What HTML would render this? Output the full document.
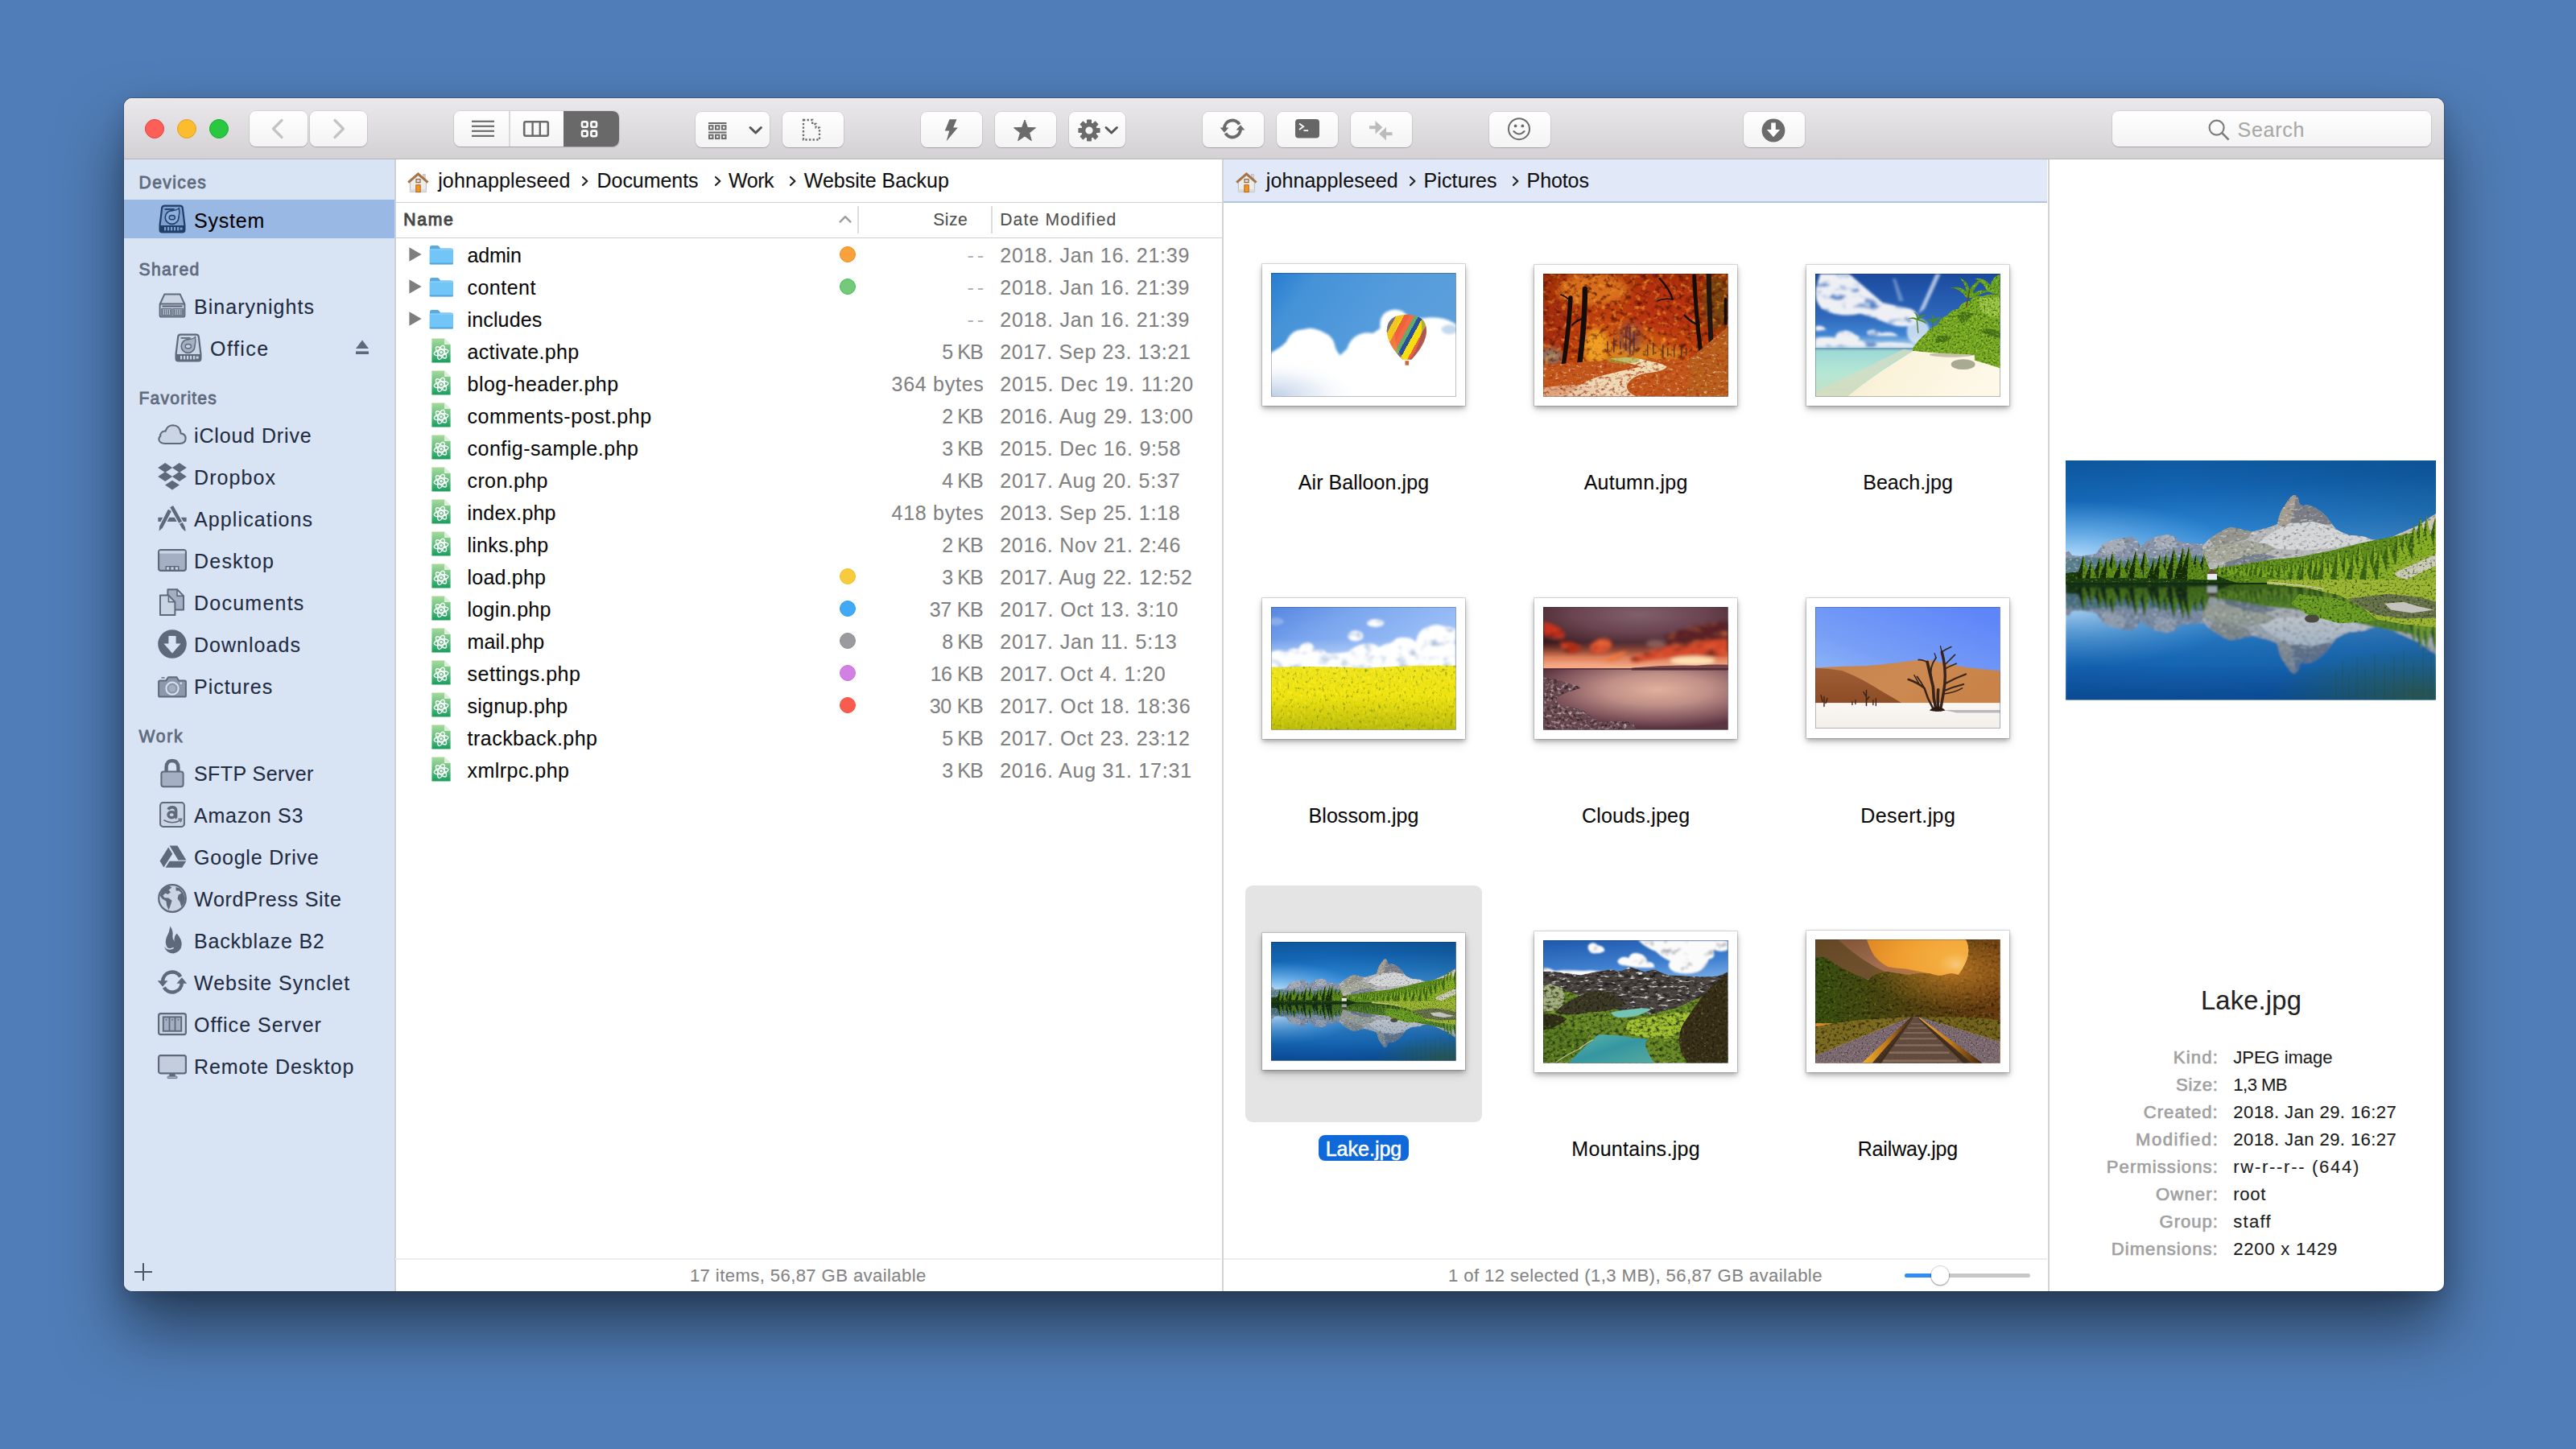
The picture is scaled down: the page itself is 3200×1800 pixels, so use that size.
<!DOCTYPE html>
<html lang="en"><head><meta charset="utf-8"><title>ForkLift</title>
<style>
html,body{margin:0;padding:0}
body{width:3200px;height:1800px;overflow:hidden;position:relative;background:#507db7;font-family:"Liberation Sans",sans-serif;}
.b{position:absolute;box-sizing:border-box;display:block}
.t{position:absolute;white-space:pre;font-family:"Liberation Sans",sans-serif}
#win{position:absolute;left:154px;top:122px;width:2882px;height:1482px;border-radius:10px;background:#fff;overflow:hidden}
#shadow{position:absolute;left:154px;top:122px;width:2882px;height:1482px;border-radius:10px;box-shadow:0 46px 80px rgba(0,0,0,.50), 0 0 0 1px rgba(0,0,0,.22), 0 8px 24px rgba(0,0,0,.16)}
#g{position:absolute;left:-154px;top:-122px;width:3200px;height:1800px}
.t{-webkit-text-stroke:0.1px currentColor}
</style></head><body>
<div id="shadow"></div>
<div id="win"><div id="g">
<div class="b" style="left:154px;top:122px;width:2882px;height:76px;background:linear-gradient(#eae8eb,#d3d1d4);border-bottom:1.5px solid #b6b4b6;border-top:1px solid #f5f4f5"></div>
<div class="b" style="left:154px;top:198px;width:338px;height:1406px;background:#d8e3f3;border-right:2px solid #cdd0d5"></div>
<div class="b" style="left:1517.5px;top:198px;width:2px;height:1406px;background:#d3d3d3"></div>
<div class="b" style="left:2543.5px;top:198px;width:2px;height:1406px;background:#d3d3d3"></div>
<div class="b" style="left:492px;top:198px;width:1026px;height:54px;background:#fff;border-bottom:1.2px solid #cfcfcf"></div>
<div class="b" style="left:1520px;top:198px;width:1023px;height:54px;background:#e1e8f8;border-bottom:2px solid #b5c3df"></div>
<div class="b" style="left:492px;top:294.6px;width:1026px;height:1.2px;background:#cfcfcf"></div>
<div class="b" style="left:491px;top:1563px;width:1026px;height:2px;background:#ececec"></div>
<div class="b" style="left:1520px;top:1563px;width:1023px;height:2px;background:#ececec"></div>
<div class="b" style="left:180px;top:148px;width:24px;height:24px;border-radius:50%;background:#fc5f57;border:1px solid #e0443e"></div>
<div class="b" style="left:220px;top:148px;width:24px;height:24px;border-radius:50%;background:#fdbc2e;border:1px solid #dea123"></div>
<div class="b" style="left:260px;top:148px;width:24px;height:24px;border-radius:50%;background:#28c840;border:1px solid #1aab29"></div>
<div class="b" style="left:310px;top:138.3px;width:72px;height:43.4px;border-radius:8px;background:linear-gradient(#ffffff,#f3f3f3);box-shadow:0 0 0 1px rgba(0,0,0,.075),0 1.2px 0.8px -0.2px rgba(0,0,0,.17);"></div>
<div class="b" style="left:384.5px;top:138.3px;width:71.5px;height:43.4px;border-radius:8px;background:linear-gradient(#ffffff,#f3f3f3);box-shadow:0 0 0 1px rgba(0,0,0,.075),0 1.2px 0.8px -0.2px rgba(0,0,0,.17);"></div>
<svg class="b" style="left:330px;top:140px;" width="40" height="40" viewBox="0 0 40 40"><path d="M20 9.5 L9.5 20 L20 30.5" fill="none" stroke="#c3c3c3" stroke-width="3.2" stroke-linecap="round" stroke-linejoin="round"/></svg>
<svg class="b" style="left:400px;top:140px;" width="40" height="40" viewBox="0 0 40 40"><path d="M16 9.5 L26.5 20 L16 30.5" fill="none" stroke="#c3c3c3" stroke-width="3.2" stroke-linecap="round" stroke-linejoin="round"/></svg>
<div class="b" style="left:564px;top:138.3px;width:205px;height:43.4px;border-radius:8px;background:linear-gradient(#ffffff,#f3f3f3);box-shadow:0 0 0 1px rgba(0,0,0,.075),0 1.2px 0.8px -0.2px rgba(0,0,0,.17);overflow:hidden"><div class="b" style="left:68px;top:0;width:1.5px;height:44px;background:#dadada"></div><div class="b" style="left:136px;top:0;width:70px;height:44px;background:#6a696a"></div></div>
<svg class="b" style="left:584px;top:148px;" width="32" height="24" viewBox="0 0 32 24"><rect x="2" y="1.7" width="28" height="2.2" fill="#6b6b6b"/><rect x="2" y="7.7" width="28" height="2.2" fill="#6b6b6b"/><rect x="2" y="13.7" width="28" height="2.2" fill="#6b6b6b"/><rect x="2" y="19.8" width="28" height="2.2" fill="#6b6b6b"/></svg>
<svg class="b" style="left:648px;top:148px;" width="36" height="24" viewBox="0 0 36 24"><rect x="3.2" y="3.2" width="29.6" height="17.6" rx="2" fill="none" stroke="#6b6b6b" stroke-width="2.6"/><rect x="12.4" y="3" width="2.4" height="18" fill="#6b6b6b"/><rect x="21.6" y="3" width="2.4" height="18" fill="#6b6b6b"/></svg>
<svg class="b" style="left:720px;top:148px;" width="24" height="24" viewBox="0 0 24 24"><rect x="3" y="3.2" width="6.6" height="6.6" rx="1.6" fill="none" stroke="#fff" stroke-width="2.6"/><rect x="3" y="14.6" width="6.6" height="6.6" rx="1.6" fill="none" stroke="#fff" stroke-width="2.6"/><rect x="14.4" y="3.2" width="6.6" height="6.6" rx="1.6" fill="none" stroke="#fff" stroke-width="2.6"/><rect x="14.4" y="14.6" width="6.6" height="6.6" rx="1.6" fill="none" stroke="#fff" stroke-width="2.6"/></svg>
<div class="b" style="left:864px;top:139.3px;width:92px;height:43.4px;border-radius:8px;background:linear-gradient(#ffffff,#f3f3f3);box-shadow:0 0 0 1px rgba(0,0,0,.075),0 1.2px 0.8px -0.2px rgba(0,0,0,.17);"></div>
<svg class="b" style="left:880px;top:152px;" width="24" height="24" viewBox="0 0 24 24"><rect x="0" y="0" width="22.5" height="2" fill="#6b6b6b"/><rect x="1" y="4.2" width="4.5" height="4.4" fill="none" stroke="#6b6b6b" stroke-width="2"/><rect x="9" y="4.2" width="4.5" height="4.4" fill="none" stroke="#6b6b6b" stroke-width="2"/><rect x="17" y="4.2" width="4.5" height="4.4" fill="none" stroke="#6b6b6b" stroke-width="2"/><rect x="0" y="11.5" width="22.5" height="2" fill="#6b6b6b"/><rect x="1" y="15.7" width="4.5" height="4.4" fill="none" stroke="#6b6b6b" stroke-width="2"/><rect x="9" y="15.7" width="4.5" height="4.4" fill="none" stroke="#6b6b6b" stroke-width="2"/><rect x="17" y="15.7" width="4.5" height="4.4" fill="none" stroke="#6b6b6b" stroke-width="2"/></svg>
<svg class="b" style="left:928px;top:152px;" width="22" height="18" viewBox="0 0 22 18"><path d="M4 6.5 L10.7 13 L17.4 6.5" fill="none" stroke="#555" stroke-width="3" stroke-linecap="round" stroke-linejoin="round"/></svg>
<div class="b" style="left:972px;top:139.3px;width:76px;height:43.4px;border-radius:8px;background:linear-gradient(#ffffff,#f3f3f3);box-shadow:0 0 0 1px rgba(0,0,0,.075),0 1.2px 0.8px -0.2px rgba(0,0,0,.17);"></div>
<svg class="b" style="left:995px;top:146px;" width="28" height="32" viewBox="0 0 28 32"><path d="M3 3 H14.2 V8 H18.6 V12.6 H23 V27.5 H3 Z" fill="none" stroke="#6b6b6b" stroke-width="2.3" stroke-dasharray="2.3 2.3"/></svg>
<div class="b" style="left:1144px;top:139.3px;width:76px;height:43.4px;border-radius:8px;background:linear-gradient(#ffffff,#f3f3f3);box-shadow:0 0 0 1px rgba(0,0,0,.075),0 1.2px 0.8px -0.2px rgba(0,0,0,.17);"></div>
<svg class="b" style="left:1168px;top:146px;" width="28" height="32" viewBox="0 0 28 32"><path d="M11.5 2.2 H20.5 L16.2 12.6 H21.8 L7.6 29.6 L11.3 16.6 H5.8 Z" fill="#6b6b6b"/></svg>
<div class="b" style="left:1236px;top:139.3px;width:76px;height:43.4px;border-radius:8px;background:linear-gradient(#ffffff,#f3f3f3);box-shadow:0 0 0 1px rgba(0,0,0,.075),0 1.2px 0.8px -0.2px rgba(0,0,0,.17);"></div>
<svg class="b" style="left:1257px;top:146px;" width="32" height="32" viewBox="0 0 32 32"><polygon points="16.00,3.00 19.47,12.43 29.51,12.81 21.61,19.02 24.35,28.69 16.00,23.10 7.65,28.69 10.39,19.02 2.49,12.81 12.53,12.43" fill="#6b6b6b" stroke="#6b6b6b" stroke-width="1" stroke-linejoin="round"/></svg>
<div class="b" style="left:1328px;top:139.3px;width:70px;height:43.4px;border-radius:8px;background:linear-gradient(#ffffff,#f3f3f3);box-shadow:0 0 0 1px rgba(0,0,0,.075),0 1.2px 0.8px -0.2px rgba(0,0,0,.17);"></div>
<svg class="b" style="left:1338px;top:147px;" width="30" height="30" viewBox="0 0 30 30"><g transform="translate(15,15)"><rect x="-3" y="-13.6" width="6" height="7" rx="0.8" transform="rotate(0)" fill="#6b6b6b"/><rect x="-3" y="-13.6" width="6" height="7" rx="0.8" transform="rotate(45)" fill="#6b6b6b"/><rect x="-3" y="-13.6" width="6" height="7" rx="0.8" transform="rotate(90)" fill="#6b6b6b"/><rect x="-3" y="-13.6" width="6" height="7" rx="0.8" transform="rotate(135)" fill="#6b6b6b"/><rect x="-3" y="-13.6" width="6" height="7" rx="0.8" transform="rotate(180)" fill="#6b6b6b"/><rect x="-3" y="-13.6" width="6" height="7" rx="0.8" transform="rotate(225)" fill="#6b6b6b"/><rect x="-3" y="-13.6" width="6" height="7" rx="0.8" transform="rotate(270)" fill="#6b6b6b"/><rect x="-3" y="-13.6" width="6" height="7" rx="0.8" transform="rotate(315)" fill="#6b6b6b"/><circle r="7.2" fill="none" stroke="#6b6b6b" stroke-width="5.2"/></g></svg>
<svg class="b" style="left:1370px;top:152px;" width="22" height="18" viewBox="0 0 22 18"><path d="M4 6.5 L10.7 13 L17.4 6.5" fill="none" stroke="#555" stroke-width="3" stroke-linecap="round" stroke-linejoin="round"/></svg>
<div class="b" style="left:1494px;top:139.3px;width:76px;height:43.4px;border-radius:8px;background:linear-gradient(#ffffff,#f3f3f3);box-shadow:0 0 0 1px rgba(0,0,0,.075),0 1.2px 0.8px -0.2px rgba(0,0,0,.17);"></div>
<svg class="b" style="left:1515px;top:144px;" width="32" height="32" viewBox="0 0 32 32"><path d="M6 15.4 A10 10 0 0 1 24.6 10.4" fill="none" stroke="#6b6b6b" stroke-width="4"/><path d="M26 16.6 A10 10 0 0 1 7.4 21.6" fill="none" stroke="#6b6b6b" stroke-width="4"/><path d="M0.6 14.6 H11.4 L6 20.8 Z" fill="#6b6b6b"/><path d="M20.6 17.4 H31.4 L26 11.2 Z" fill="#6b6b6b"/></svg>
<div class="b" style="left:1586px;top:139.3px;width:76px;height:43.4px;border-radius:8px;background:linear-gradient(#ffffff,#f3f3f3);box-shadow:0 0 0 1px rgba(0,0,0,.075),0 1.2px 0.8px -0.2px rgba(0,0,0,.17);"></div>
<svg class="b" style="left:1608px;top:147px;" width="32" height="26" viewBox="0 0 32 26"><rect x="1" y="1" width="30" height="23.6" rx="4" fill="#666"/><path d="M6 6.5 L11.2 10.2 L6 13.9" fill="none" stroke="#fff" stroke-width="1.8"/><rect x="11.5" y="14.3" width="5.6" height="1.8" fill="#fff"/></svg>
<div class="b" style="left:1678px;top:139.3px;width:76px;height:43.4px;border-radius:8px;background:linear-gradient(#ffffff,#f3f3f3);box-shadow:0 0 0 1px rgba(0,0,0,.075),0 1.2px 0.8px -0.2px rgba(0,0,0,.17);"></div>
<svg class="b" style="left:1699px;top:147px;" width="34" height="30" viewBox="0 0 34 30"><path d="M2 9.2 H9.5 V3 L18.4 11.2 L9.5 19.4 V13.2 H2 Z" fill="#bcbcbc"/><path d="M30.5 17.2 H23 V11 L14.1 19.2 L23 27.4 V21.2 H30.5 Z" fill="#bcbcbc"/></svg>
<div class="b" style="left:1850px;top:139.3px;width:76px;height:43.4px;border-radius:8px;background:linear-gradient(#ffffff,#f3f3f3);box-shadow:0 0 0 1px rgba(0,0,0,.075),0 1.2px 0.8px -0.2px rgba(0,0,0,.17);"></div>
<svg class="b" style="left:1871px;top:144px;" width="32" height="32" viewBox="0 0 32 32"><circle cx="16" cy="16.2" r="13" fill="none" stroke="#6b6b6b" stroke-width="2"/><circle cx="11.6" cy="12.4" r="1.9" fill="#6b6b6b"/><circle cx="20.4" cy="12.4" r="1.9" fill="#6b6b6b"/><path d="M9.4 19 Q16 26 22.6 19" fill="none" stroke="#6b6b6b" stroke-width="2" stroke-linecap="round"/></svg>
<div class="b" style="left:2166px;top:139.3px;width:76px;height:43.4px;border-radius:8px;background:linear-gradient(#ffffff,#f3f3f3);box-shadow:0 0 0 1px rgba(0,0,0,.075),0 1.2px 0.8px -0.2px rgba(0,0,0,.17);"></div>
<svg class="b" style="left:2187px;top:146px;" width="32" height="32" viewBox="0 0 32 32"><circle cx="16" cy="16" r="14.4" fill="#6b6b6b"/><path d="M13.2 6.6 H18.8 V15 H24.2 L16 24.2 L7.8 15 H13.2 Z" fill="#fff"/></svg>
<div class="b" style="left:2624px;top:138.3px;width:396px;height:43.4px;border-radius:8px;background:linear-gradient(#ffffff,#f3f3f3);box-shadow:0 0 0 1px rgba(0,0,0,.075),0 1.2px 0.8px -0.2px rgba(0,0,0,.17);"></div>
<svg class="b" style="left:2742px;top:147px;" width="30" height="30" viewBox="0 0 30 30"><circle cx="11.6" cy="11.6" r="9" fill="none" stroke="#7b7b7b" stroke-width="2.2"/><path d="M18.2 18.2 L26.6 26.6" stroke="#7b7b7b" stroke-width="2.6"/></svg>
<div class="t" style="left:2779.5px;top:147px;font-size:25.0px;line-height:28px;color:#a8a8a8;letter-spacing:0.76px;">Search</div>
<div class="b" style="left:154px;top:248px;width:336px;height:48px;background:#9ab8e4"></div>
<div class="t" style="left:172.5px;top:215px;font-size:21.15px;line-height:23px;color:#5f6b7e;letter-spacing:1.36px;-webkit-text-stroke:0.8px currentColor;">Devices</div>
<div class="t" style="left:172.5px;top:323px;font-size:21.15px;line-height:23px;color:#5f6b7e;letter-spacing:1.32px;-webkit-text-stroke:0.8px currentColor;">Shared</div>
<div class="t" style="left:172.5px;top:483px;font-size:21.15px;line-height:23px;color:#5f6b7e;letter-spacing:1.17px;-webkit-text-stroke:0.8px currentColor;">Favorites</div>
<div class="t" style="left:172.5px;top:903px;font-size:21.15px;line-height:23px;color:#5f6b7e;letter-spacing:1.75px;-webkit-text-stroke:0.8px currentColor;">Work</div>
<svg class="b" style="left:196px;top:253.8px;" width="36" height="36" viewBox="0 0 36 36"><path d="M8.2 1.6 H27.8 Q30.4 1.6 30.8 4.2 L33.4 25.6 V31.4 Q33.4 34.4 30.4 34.4 H5.6 Q2.6 34.4 2.6 31.4 V25.6 L5.2 4.2 Q5.6 1.6 8.2 1.6 Z" fill="#7e9fd0" stroke="#1d3f68" stroke-width="2.2" stroke-linejoin="round"/><path d="M3 26 H33 V31.4 Q33 33.9 30.4 33.9 H5.6 Q3 33.9 3 31.4 Z" fill="#1d3f68"/><rect x="8" y="28" width="2.2" height="4.4" fill="#7e9fd0"/><rect x="12" y="28" width="2.2" height="4.4" fill="#7e9fd0"/><rect x="16" y="28" width="2.2" height="4.4" fill="#7e9fd0"/><rect x="20" y="28" width="2.2" height="4.4" fill="#7e9fd0"/><rect x="24" y="28" width="2.2" height="4.4" fill="#7e9fd0"/><rect x="27.6" y="28.6" width="3" height="3" fill="#7e9fd0"/><rect x="8.6" y="5" width="12" height="1.8" fill="#1d3f68"/><circle cx="17.6" cy="16" r="8.4" fill="#8fb0dc" stroke="#1d3f68" stroke-width="1.6"/><path d="M17.6 7.6 Q24 7.4 26.4 4.6 Q27.6 10 26 16" fill="#8fb0dc" stroke="#1d3f68" stroke-width="1.4"/><ellipse cx="17.8" cy="16.2" rx="3.6" ry="2.6" fill="#7e9fd0" stroke="#1d3f68" stroke-width="1.5"/></svg>
<div class="t" style="left:241.0px;top:260px;font-size:25.0px;line-height:28px;color:#000;letter-spacing:0.81px;">System</div>
<svg class="b" style="left:196px;top:363.6px;" width="36" height="31" viewBox="0 0 36 31"><path d="M8.4 1.4 H27.6 L33.4 14 H2.6 Z" fill="#cbd4e3" stroke="#5e6a7b" stroke-width="2" stroke-linejoin="round"/><rect x="2.6" y="13.4" width="30.8" height="16.2" rx="2.2" fill="#cbd4e3" stroke="#5e6a7b" stroke-width="2"/><rect x="5.4" y="15.4" width="25.2" height="2.2" fill="#5e6a7b"/><rect x="5.6" y="20.4" width="1.3" height="6.4" fill="#5e6a7b"/><rect x="8" y="20.4" width="1.3" height="6.4" fill="#5e6a7b"/><rect x="10.4" y="20.4" width="1.3" height="6.4" fill="#5e6a7b"/><rect x="12.8" y="20.4" width="1.3" height="6.4" fill="#5e6a7b"/><rect x="15.2" y="20.4" width="1.3" height="6.4" fill="#5e6a7b"/><rect x="20" y="20.4" width="1.3" height="6.4" fill="#5e6a7b"/><rect x="22.4" y="20.4" width="1.3" height="6.4" fill="#5e6a7b"/><rect x="24.8" y="20.4" width="1.3" height="6.4" fill="#5e6a7b"/><rect x="27.2" y="20.4" width="1.3" height="6.4" fill="#5e6a7b"/><rect x="29.4" y="20.4" width="1.3" height="6.4" fill="#5e6a7b"/><rect x="4.8" y="19.6" width="12.4" height="8" fill="none" stroke="#5e6a7b" stroke-width="1.2"/><rect x="19" y="19.6" width="12.4" height="8" fill="none" stroke="#5e6a7b" stroke-width="1.2"/></svg>
<div class="t" style="left:241.0px;top:367px;font-size:25.0px;line-height:28px;color:#1f2c42;letter-spacing:1.03px;">Binarynights</div>
<svg class="b" style="left:216px;top:413.8px;" width="36" height="36" viewBox="0 0 36 36"><path d="M8.2 1.6 H27.8 Q30.4 1.6 30.8 4.2 L33.4 25.6 V31.4 Q33.4 34.4 30.4 34.4 H5.6 Q2.6 34.4 2.6 31.4 V25.6 L5.2 4.2 Q5.6 1.6 8.2 1.6 Z" fill="#cbd4e3" stroke="#5e6a7b" stroke-width="2.2" stroke-linejoin="round"/><path d="M3 26 H33 V31.4 Q33 33.9 30.4 33.9 H5.6 Q3 33.9 3 31.4 Z" fill="#5e6a7b"/><rect x="8" y="28" width="2.2" height="4.4" fill="#cbd4e3"/><rect x="12" y="28" width="2.2" height="4.4" fill="#cbd4e3"/><rect x="16" y="28" width="2.2" height="4.4" fill="#cbd4e3"/><rect x="20" y="28" width="2.2" height="4.4" fill="#cbd4e3"/><rect x="24" y="28" width="2.2" height="4.4" fill="#cbd4e3"/><rect x="27.6" y="28.6" width="3" height="3" fill="#cbd4e3"/><rect x="8.6" y="5" width="12" height="1.8" fill="#5e6a7b"/><circle cx="17.6" cy="16" r="8.4" fill="#a4afc3" stroke="#5e6a7b" stroke-width="1.6"/><path d="M17.6 7.6 Q24 7.4 26.4 4.6 Q27.6 10 26 16" fill="#a4afc3" stroke="#5e6a7b" stroke-width="1.4"/><ellipse cx="17.8" cy="16.2" rx="3.6" ry="2.6" fill="#cbd4e3" stroke="#5e6a7b" stroke-width="1.5"/></svg>
<div class="t" style="left:261.1px;top:419px;font-size:25.0px;line-height:28px;color:#1f2c42;letter-spacing:1.43px;">Office</div>
<svg class="b" style="left:440px;top:420px;" width="20" height="22" viewBox="0 0 20 22"><path d="M10 2.4 L18 13 H2 Z" fill="#5e6a7b"/><rect x="2" y="16.4" width="16" height="3.6" fill="#5e6a7b"/></svg>
<div class="t" style="left:241.0px;top:527px;font-size:25.0px;line-height:28px;color:#1f2c42;letter-spacing:0.87px;">iCloud Drive</div>
<div class="t" style="left:241.0px;top:579px;font-size:25.0px;line-height:28px;color:#1f2c42;letter-spacing:1.08px;">Dropbox</div>
<div class="t" style="left:241.0px;top:631px;font-size:25.0px;line-height:28px;color:#1f2c42;letter-spacing:1.12px;">Applications</div>
<div class="t" style="left:241.0px;top:683px;font-size:25.0px;line-height:28px;color:#1f2c42;letter-spacing:1.21px;">Desktop</div>
<div class="t" style="left:241.0px;top:735px;font-size:25.0px;line-height:28px;color:#1f2c42;letter-spacing:1.24px;">Documents</div>
<div class="t" style="left:241.0px;top:787px;font-size:25.0px;line-height:28px;color:#1f2c42;letter-spacing:1.03px;">Downloads</div>
<div class="t" style="left:241.0px;top:839px;font-size:25.0px;line-height:28px;color:#1f2c42;letter-spacing:0.98px;">Pictures</div>
<div class="t" style="left:241.0px;top:947px;font-size:25.0px;line-height:28px;color:#1f2c42;letter-spacing:0.44px;">SFTP Server</div>
<div class="t" style="left:241.0px;top:999px;font-size:25.0px;line-height:28px;color:#1f2c42;letter-spacing:0.78px;">Amazon S3</div>
<div class="t" style="left:241.0px;top:1051px;font-size:25.0px;line-height:28px;color:#1f2c42;letter-spacing:0.80px;">Google Drive</div>
<div class="t" style="left:241.0px;top:1103px;font-size:25.0px;line-height:28px;color:#1f2c42;letter-spacing:0.75px;">WordPress Site</div>
<div class="t" style="left:241.0px;top:1155px;font-size:25.0px;line-height:28px;color:#1f2c42;letter-spacing:0.81px;">Backblaze B2</div>
<div class="t" style="left:241.0px;top:1207px;font-size:25.0px;line-height:28px;color:#1f2c42;letter-spacing:1.03px;">Website Synclet</div>
<div class="t" style="left:241.0px;top:1259px;font-size:25.0px;line-height:28px;color:#1f2c42;letter-spacing:1.04px;">Office Server</div>
<div class="t" style="left:241.0px;top:1311px;font-size:25.0px;line-height:28px;color:#1f2c42;letter-spacing:0.93px;">Remote Desktop</div>
<svg class="b" style="left:196px;top:526px;" width="36" height="27" viewBox="0 0 36 27"><path d="M9.2 25 H27.4 Q34.6 24.6 34.6 18.4 Q34.4 13.2 28.6 12.4 Q27.6 2.2 18.4 2.2 Q11.6 2.6 9.6 9.6 Q6.4 9 4.4 11.6 Q2.6 13.6 3.4 15.6 Q1.2 17 1.4 20 Q1.8 24.6 9.2 25 Z" fill="#cbd4e3" stroke="#5e6a7b" stroke-width="2.1" stroke-linejoin="round"/></svg>
<svg class="b" style="left:196px;top:575.4px;" width="36" height="34" viewBox="0 0 36 34"><path d="M9.2 0.09999999999999964 L18.2 6 L9.2 11.9 L0.1999999999999993 6 Z" fill="#5e6a7b"/><path d="M26.8 0.09999999999999964 L35.8 6 L26.8 11.9 L17.8 6 Z" fill="#5e6a7b"/><path d="M9.2 11.1 L18.2 17 L9.2 22.9 L0.1999999999999993 17 Z" fill="#5e6a7b"/><path d="M26.8 11.1 L35.8 17 L26.8 22.9 L17.8 17 Z" fill="#5e6a7b"/><path d="M18 21.700000000000003 L27 27.6 L18 33.5 L9 27.6 Z" fill="#5e6a7b"/></svg>
<svg class="b" style="left:196px;top:626.6px;" width="36" height="35" viewBox="0 0 36 35"><rect x="0.4" y="15.8" width="35.2" height="5.2" fill="#5e6a7b"/><path d="M12.6 4.8 L18 7.6 L6.4 29.4 L0.8 34.2 L1.4 26.6 Z" fill="#5e6a7b" stroke="#d8e3f3" stroke-width="1.4"/><path d="M14.4 3 L19.4 0.2 L32.6 23.8 Q36 29 35 34 Q30.2 31.8 27.8 26.8 Z" fill="#5e6a7b" stroke="#d8e3f3" stroke-width="1.4"/><path d="M26.6 23.4 L31 21" stroke="#d8e3f3" stroke-width="1.4"/></svg>
<svg class="b" style="left:196px;top:682px;" width="36" height="28" viewBox="0 0 36 28"><rect x="1.1" y="1.1" width="33.8" height="25.8" rx="3" fill="#a4afc3" stroke="#5e6a7b" stroke-width="2.2"/><rect x="2.2" y="2.2" width="31.6" height="3.4" fill="#cbd4e3"/><rect x="9.6" y="21" width="16.8" height="5" fill="#5e6a7b"/><rect x="11" y="22.4" width="3.2" height="3.2" fill="#cbd4e3"/><rect x="16.4" y="22.4" width="3.2" height="3.2" fill="#cbd4e3"/><rect x="21.8" y="22.4" width="3.2" height="3.2" fill="#cbd4e3"/></svg>
<svg class="b" style="left:196px;top:730.6px;" width="36" height="35" viewBox="0 0 36 35"><path d="M12.4 1.2 H24 L32 9.4 V26.4 H12.4 Z" fill="#a4afc3" stroke="#5e6a7b" stroke-width="2" stroke-linejoin="round"/><path d="M24 1.2 V9.4 H32 Z" fill="#cbd4e3" stroke="#5e6a7b" stroke-width="1.6" stroke-linejoin="round"/><path d="M3 8.6 H13.4 L21.4 16.8 V33 H3 Z" fill="#cbd4e3" stroke="#5e6a7b" stroke-width="2" stroke-linejoin="round"/><path d="M13.4 8.6 V16.8 H21.4" fill="none" stroke="#5e6a7b" stroke-width="1.6" stroke-linejoin="round"/></svg>
<svg class="b" style="left:196px;top:782px;" width="36" height="36" viewBox="0 0 36 36"><circle cx="18" cy="18" r="17.8" fill="#5e6a7b"/><path d="M13.4 8 H22.6 V17.6 H28.6 L18 29.6 L7.4 17.6 H13.4 Z" fill="#d8e3f3"/></svg>
<svg class="b" style="left:196px;top:839.6px;" width="36" height="27" viewBox="0 0 36 27"><path d="M4.4 1.2 H8.6 V2.6 H4.4 Z" fill="#5e6a7b"/><path d="M2.6 5.4 H10.4 L13 1.2 H23.6 L26 5.4 H33.4 Q34.9 5.4 34.9 7 V24 Q34.9 25.6 33.4 25.6 H2.6 Q1.1 25.6 1.1 24 V7 Q1.1 5.4 2.6 5.4 Z" fill="#8d98ac" stroke="#5e6a7b" stroke-width="2" stroke-linejoin="round"/><circle cx="18" cy="15.2" r="7.6" fill="#8d98ac" stroke="#d8e3f3" stroke-width="2"/><circle cx="18" cy="15.2" r="4.2" fill="#a4afc3"/><circle cx="28.8" cy="8.8" r="1.3" fill="#d8e3f3"/></svg>
<svg class="b" style="left:198px;top:941.6px;" width="32" height="37" viewBox="0 0 32 37"><path d="M8.6 17 V11.6 Q8.6 3 16 3 Q23.4 3 23.4 11.6 V17" fill="none" stroke="#5e6a7b" stroke-width="4.4"/><rect x="2.4" y="16.6" width="27.2" height="18.6" rx="3" fill="#a4afc3" stroke="#5e6a7b" stroke-width="2"/></svg>
<svg class="b" style="left:198px;top:995.6px;" width="32" height="32" viewBox="0 0 32 32"><rect x="1.1" y="1.1" width="29.8" height="29.8" rx="3.4" fill="#cbd4e3" stroke="#5e6a7b" stroke-width="2"/><path d="M11 9.6 Q12.6 6.6 16.4 6.8 Q20.6 7 20.6 11 V18.4 Q20.6 19.6 21.6 20.2" fill="none" stroke="#5e6a7b" stroke-width="3.6"/><ellipse cx="15.2" cy="16.2" rx="4.2" ry="3.6" fill="none" stroke="#5e6a7b" stroke-width="3.4"/><path d="M5.4 22.8 Q15.6 28.6 26.4 23" fill="none" stroke="#5e6a7b" stroke-width="1.7"/><path d="M23.2 21.6 L27.6 21.4 L26.4 25.4" fill="none" stroke="#5e6a7b" stroke-width="1.5"/></svg>
<svg class="b" style="left:197.6px;top:1050.4px;" width="34" height="29" viewBox="0 0 34 29"><path d="M12.6 0.6 H22.4 L33.4 18.6 H23.4 Z" fill="#5e6a7b"/><path d="M11.2 2.6 L16.2 10.8 L5.4 27.6 L0.6 19.4 Z" fill="#5e6a7b"/><path d="M12.6 19.8 H33.2 L28.2 27.8 H7.6 Z" fill="#5e6a7b"/></svg>
<svg class="b" style="left:196px;top:1097.8px;" width="36" height="36" viewBox="0 0 36 36"><circle cx="18" cy="18" r="16.8" fill="#cbd4e3" stroke="#5e6a7b" stroke-width="2.2"/><path d="M5.4 8 Q9 3.6 14.4 2.4 L17.4 4.6 L13.6 7.6 L16 10.6 L12.4 13 L9.6 11.4 L6.4 14.4 L8.4 17.2 L13.4 17.4 L17.6 20.8 L16 26 L13.6 32.4 L11.2 27 L10.4 21.6 L5.4 18.4 L2.6 14.6 Z" fill="#5e6a7b"/><path d="M22.4 4 L27.4 5.6 L32 11.6 L34 18.4 L32.4 24.6 L29.2 28.6 L27.6 22.4 L24.6 18.6 L25.6 13.8 L29.4 11.6 L26.4 8.6 L22.6 8.4 Z" fill="#5e6a7b"/></svg>
<svg class="b" style="left:203.4px;top:1150.4px;" width="24" height="36" viewBox="0 0 24 36"><path d="M8.4 0.6 Q12.4 6.6 11.4 12.6 Q11 16.6 13.6 19.4 Q12.8 13.4 16.6 9.4 Q23.4 17 22.6 24 Q22 32 12.4 34.6 Q2.8 33.6 1.2 26 Q2.6 27.6 5 27.6 Q1 21 4 14 Q7.6 8 8.4 0.6 Z" fill="#5e6a7b"/><path d="M2.6 26.6 Q7 31 12.6 27.4" fill="none" stroke="#d8e3f3" stroke-width="1.6"/></svg>
<svg class="b" style="left:195px;top:1200.8px;" width="38" height="38" viewBox="0 0 32 32"><path d="M6 15.4 A10 10 0 0 1 24.6 10.4" fill="none" stroke="#5e6a7b" stroke-width="3.8"/><path d="M26 16.6 A10 10 0 0 1 7.4 21.6" fill="none" stroke="#5e6a7b" stroke-width="3.8"/><path d="M0.6 14.6 H11.4 L6 20.8 Z" fill="#5e6a7b"/><path d="M20.6 17.4 H31.4 L26 11.2 Z" fill="#5e6a7b"/></svg>
<svg class="b" style="left:196px;top:1257.6px;" width="36" height="29" viewBox="0 0 36 29"><rect x="1.1" y="1.1" width="33.8" height="26" rx="2.6" fill="#cbd4e3" stroke="#5e6a7b" stroke-width="2.2"/><rect x="6.8" y="5.4" width="22.4" height="17.4" fill="#a4afc3" stroke="#5e6a7b" stroke-width="2"/><rect x="13.6" y="5.4" width="1.8" height="17.4" fill="#5e6a7b"/><rect x="20.6" y="5.4" width="1.8" height="17.4" fill="#5e6a7b"/><rect x="9.8" y="8" width="1.6" height="1.6" fill="#5e6a7b"/><rect x="17.2" y="8" width="1.6" height="1.6" fill="#5e6a7b"/><rect x="24.6" y="8" width="1.6" height="1.6" fill="#5e6a7b"/></svg>
<svg class="b" style="left:196px;top:1309.8px;" width="36" height="31" viewBox="0 0 36 31"><rect x="1.1" y="1.1" width="33.8" height="22.2" rx="2.4" fill="#c4cddd" stroke="#5e6a7b" stroke-width="2.2"/><path d="M14.6 24 H21.4 L22 27 H14 Z" fill="#5e6a7b"/><rect x="12" y="27" width="12" height="2.6" rx="0.6" fill="#a4afc3" stroke="#5e6a7b" stroke-width="0.8"/></svg>
<svg class="b" style="left:166px;top:1568px;" width="24" height="24" viewBox="0 0 24 24"><path d="M12 1 V23 M1 12 H23" stroke="#4e5663" stroke-width="2"/></svg>
<svg class="b" style="left:506.4px;top:213.9px;" width="27" height="26" viewBox="0 0 27 26"><path d="M3.4 11.6 L13.4 3.4 L23.4 11.6 V24.6 H3.4 Z" fill="#ececec" stroke="#b4b4b4" stroke-width="0.9"/><path d="M3.4 21 H23.4 V24.6 H3.4 Z" fill="#dcdcdc"/><rect x="19.4" y="2.6" width="2.8" height="6" fill="#cfcfcf" stroke="#aaa" stroke-width="0.5"/><path d="M1.2 12.6 L13.4 2 L25.6 12.6" fill="none" stroke="#a67347" stroke-width="3" stroke-linejoin="miter"/><rect x="11" y="8.6" width="5" height="4" fill="#cfe0f0" stroke="#a0622c" stroke-width="1.2"/><rect x="10.8" y="15.8" width="5.4" height="8.8" fill="#f3951f" stroke="#b8641a" stroke-width="1"/></svg>
<div class="t" style="left:544.2px;top:210px;font-size:25.0px;line-height:28px;color:#111;letter-spacing:0.13px;">johnappleseed</div>
<div class="t" style="left:741.6px;top:210px;font-size:25.0px;line-height:28px;color:#111;letter-spacing:-0.06px;">Documents</div>
<div class="t" style="left:905.0px;top:210px;font-size:25.0px;line-height:28px;color:#111;letter-spacing:-0.46px;">Work</div>
<div class="t" style="left:998.8px;top:210px;font-size:25.0px;line-height:28px;color:#111;letter-spacing:-0.01px;">Website Backup</div>
<svg class="b" style="left:722.4px;top:218px;" width="10" height="14" viewBox="0 0 10 14"><path d="M2 2 L7.4 7 L2 12" fill="none" stroke="#222" stroke-width="2.2" stroke-linecap="round" stroke-linejoin="round"/></svg>
<svg class="b" style="left:886.6px;top:218px;" width="10" height="14" viewBox="0 0 10 14"><path d="M2 2 L7.4 7 L2 12" fill="none" stroke="#222" stroke-width="2.2" stroke-linecap="round" stroke-linejoin="round"/></svg>
<svg class="b" style="left:980.4px;top:218px;" width="10" height="14" viewBox="0 0 10 14"><path d="M2 2 L7.4 7 L2 12" fill="none" stroke="#222" stroke-width="2.2" stroke-linecap="round" stroke-linejoin="round"/></svg>
<svg class="b" style="left:1535.2px;top:213.9px;" width="27" height="26" viewBox="0 0 27 26"><path d="M3.4 11.6 L13.4 3.4 L23.4 11.6 V24.6 H3.4 Z" fill="#ececec" stroke="#b4b4b4" stroke-width="0.9"/><path d="M3.4 21 H23.4 V24.6 H3.4 Z" fill="#dcdcdc"/><rect x="19.4" y="2.6" width="2.8" height="6" fill="#cfcfcf" stroke="#aaa" stroke-width="0.5"/><path d="M1.2 12.6 L13.4 2 L25.6 12.6" fill="none" stroke="#a67347" stroke-width="3" stroke-linejoin="miter"/><rect x="11" y="8.6" width="5" height="4" fill="#cfe0f0" stroke="#a0622c" stroke-width="1.2"/><rect x="10.8" y="15.8" width="5.4" height="8.8" fill="#f3951f" stroke="#b8641a" stroke-width="1"/></svg>
<div class="t" style="left:1572.8px;top:210px;font-size:25.0px;line-height:28px;color:#111;letter-spacing:0.11px;">johnappleseed</div>
<div class="t" style="left:1768.6px;top:210px;font-size:25.0px;line-height:28px;color:#111;letter-spacing:0.10px;">Pictures</div>
<div class="t" style="left:1896.6px;top:210px;font-size:25.0px;line-height:28px;color:#111;letter-spacing:-0.11px;">Photos</div>
<svg class="b" style="left:1750.2px;top:218px;" width="10" height="14" viewBox="0 0 10 14"><path d="M2 2 L7.4 7 L2 12" fill="none" stroke="#222" stroke-width="2.2" stroke-linecap="round" stroke-linejoin="round"/></svg>
<svg class="b" style="left:1878px;top:218px;" width="10" height="14" viewBox="0 0 10 14"><path d="M2 2 L7.4 7 L2 12" fill="none" stroke="#222" stroke-width="2.2" stroke-linecap="round" stroke-linejoin="round"/></svg>
<div class="t" style="left:501.3px;top:261px;font-size:21.15px;line-height:23px;color:#474747;letter-spacing:1.73px;-webkit-text-stroke:1px currentColor;">Name</div>
<div class="t" style="left:1159.3px;top:261px;font-size:21.15px;line-height:23px;color:#4f4f4f;letter-spacing:0.42px;">Size</div>
<div class="t" style="left:1242.2px;top:261px;font-size:21.15px;line-height:23px;color:#4f4f4f;letter-spacing:1.14px;">Date Modified</div>
<div class="b" style="left:1065px;top:256px;width:2px;height:34px;background:#dcdcdc"></div>
<div class="b" style="left:1231px;top:256px;width:2px;height:34px;background:#dcdcdc"></div>
<svg class="b" style="left:1041px;top:265px;" width="18" height="14" viewBox="0 0 18 14"><path d="M2.6 10.6 L9 4.2 L15.4 10.6" fill="none" stroke="#9b9b9b" stroke-width="2.4" stroke-linecap="round" stroke-linejoin="round"/></svg>
<svg class="b" style="left:507px;top:306.2px;" width="18" height="20" viewBox="0 0 18 20"><path d="M1.4 1.2 L16.6 10 L1.4 18.8 Z" fill="#7e7e7e"/></svg>
<svg class="b" style="left:532.6px;top:303.8px;" width="31" height="25" viewBox="0 0 31 25"><path d="M1 3.4 Q1 1 3.4 1 H10.4 Q12 1 12.8 2.6 L13.8 4.4 H27.4 Q29.6 4.4 29.6 6.6 V8 H1 Z" fill="#5aa9e2"/><rect x="0.6" y="5.4" width="29.4" height="18.8" rx="1.8" fill="#72c5f7"/><rect x="0.6" y="22.6" width="29.4" height="1.8" rx="0.9" fill="#4fa5e0"/><rect x="0.6" y="5.4" width="29.4" height="1.4" fill="#8ad2fb"/></svg>
<div class="t" style="left:580.5px;top:303px;font-size:25.0px;line-height:28px;color:#0a0a0a;letter-spacing:-0.20px;">admin</div>
<div class="t" style="left:1201.6px;top:303px;font-size:25.0px;line-height:28px;color:#b2b2b2;letter-spacing:3.95px;">--</div>
<div class="t" style="left:1242.2px;top:303px;font-size:25.0px;line-height:28px;color:#818181;letter-spacing:0.79px;">2018. Jan 16. 21:39</div>
<div class="b" style="left:1043px;top:306.2px;width:20px;height:20px;border-radius:50%;background:#f9a23c;border:1.5px solid #ef8c22"></div>
<svg class="b" style="left:507px;top:346.2px;" width="18" height="20" viewBox="0 0 18 20"><path d="M1.4 1.2 L16.6 10 L1.4 18.8 Z" fill="#7e7e7e"/></svg>
<svg class="b" style="left:532.6px;top:343.8px;" width="31" height="25" viewBox="0 0 31 25"><path d="M1 3.4 Q1 1 3.4 1 H10.4 Q12 1 12.8 2.6 L13.8 4.4 H27.4 Q29.6 4.4 29.6 6.6 V8 H1 Z" fill="#5aa9e2"/><rect x="0.6" y="5.4" width="29.4" height="18.8" rx="1.8" fill="#72c5f7"/><rect x="0.6" y="22.6" width="29.4" height="1.8" rx="0.9" fill="#4fa5e0"/><rect x="0.6" y="5.4" width="29.4" height="1.4" fill="#8ad2fb"/></svg>
<div class="t" style="left:580.5px;top:343px;font-size:25.0px;line-height:28px;color:#0a0a0a;letter-spacing:0.48px;">content</div>
<div class="t" style="left:1201.6px;top:343px;font-size:25.0px;line-height:28px;color:#b2b2b2;letter-spacing:3.95px;">--</div>
<div class="t" style="left:1242.2px;top:343px;font-size:25.0px;line-height:28px;color:#818181;letter-spacing:0.79px;">2018. Jan 16. 21:39</div>
<div class="b" style="left:1043px;top:346.2px;width:20px;height:20px;border-radius:50%;background:#74c97d;border:1.5px solid #3fc24c"></div>
<svg class="b" style="left:507px;top:386.2px;" width="18" height="20" viewBox="0 0 18 20"><path d="M1.4 1.2 L16.6 10 L1.4 18.8 Z" fill="#7e7e7e"/></svg>
<svg class="b" style="left:532.6px;top:383.8px;" width="31" height="25" viewBox="0 0 31 25"><path d="M1 3.4 Q1 1 3.4 1 H10.4 Q12 1 12.8 2.6 L13.8 4.4 H27.4 Q29.6 4.4 29.6 6.6 V8 H1 Z" fill="#5aa9e2"/><rect x="0.6" y="5.4" width="29.4" height="18.8" rx="1.8" fill="#72c5f7"/><rect x="0.6" y="22.6" width="29.4" height="1.8" rx="0.9" fill="#4fa5e0"/><rect x="0.6" y="5.4" width="29.4" height="1.4" fill="#8ad2fb"/></svg>
<div class="t" style="left:580.5px;top:383px;font-size:25.0px;line-height:28px;color:#0a0a0a;letter-spacing:0.15px;">includes</div>
<div class="t" style="left:1201.6px;top:383px;font-size:25.0px;line-height:28px;color:#b2b2b2;letter-spacing:3.95px;">--</div>
<div class="t" style="left:1242.2px;top:383px;font-size:25.0px;line-height:28px;color:#818181;letter-spacing:0.79px;">2018. Jan 16. 21:39</div>
<svg class="b" style="left:536px;top:420.0px;" width="24" height="31" viewBox="0 0 24 31"><defs><linearGradient id="pg" x1="0" y1="0" x2="0" y2="1"><stop offset="0" stop-color="#a9da9b"/><stop offset="0.5" stop-color="#63c07f"/><stop offset="1" stop-color="#179d5e"/></linearGradient></defs><path d="M0.4 0.4 H16 L23.6 8 V30.6 H0.4 Z" fill="url(#pg)"/><path d="M16 0.4 L23.6 8 H16 Z" fill="#dff0da"/><g fill="none" stroke="#fff" stroke-width="1.45" transform="rotate(-12 12 17.8)"><ellipse cx="12" cy="17.8" rx="9" ry="3.6"/><ellipse cx="12" cy="17.8" rx="9" ry="3.6" transform="rotate(60 12 17.8)"/><ellipse cx="12" cy="17.8" rx="9" ry="3.6" transform="rotate(120 12 17.8)"/></g><circle cx="12" cy="17.8" r="1.7" fill="#fff"/></svg>
<div class="t" style="left:580.5px;top:423px;font-size:25.0px;line-height:28px;color:#0a0a0a;letter-spacing:0.35px;">activate.php</div>
<div class="t" style="left:1170.2px;top:423px;font-size:25.0px;line-height:28px;color:#818181;letter-spacing:-0.87px;">5 KB</div>
<div class="t" style="left:1242.2px;top:423px;font-size:25.0px;line-height:28px;color:#818181;letter-spacing:0.64px;">2017. Sep 23. 13:21</div>
<svg class="b" style="left:536px;top:460.0px;" width="24" height="31" viewBox="0 0 24 31"><path d="M0.4 0.4 H16 L23.6 8 V30.6 H0.4 Z" fill="url(#pg)"/><path d="M16 0.4 L23.6 8 H16 Z" fill="#dff0da"/><g fill="none" stroke="#fff" stroke-width="1.45" transform="rotate(-12 12 17.8)"><ellipse cx="12" cy="17.8" rx="9" ry="3.6"/><ellipse cx="12" cy="17.8" rx="9" ry="3.6" transform="rotate(60 12 17.8)"/><ellipse cx="12" cy="17.8" rx="9" ry="3.6" transform="rotate(120 12 17.8)"/></g><circle cx="12" cy="17.8" r="1.7" fill="#fff"/></svg>
<div class="t" style="left:580.5px;top:463px;font-size:25.0px;line-height:28px;color:#0a0a0a;letter-spacing:0.49px;">blog-header.php</div>
<div class="t" style="left:1107.5px;top:463px;font-size:25.0px;line-height:28px;color:#818181;letter-spacing:0.74px;">364 bytes</div>
<div class="t" style="left:1242.2px;top:463px;font-size:25.0px;line-height:28px;color:#818181;letter-spacing:0.92px;">2015. Dec 19. 11:20</div>
<svg class="b" style="left:536px;top:500.00000000000006px;" width="24" height="31" viewBox="0 0 24 31"><path d="M0.4 0.4 H16 L23.6 8 V30.6 H0.4 Z" fill="url(#pg)"/><path d="M16 0.4 L23.6 8 H16 Z" fill="#dff0da"/><g fill="none" stroke="#fff" stroke-width="1.45" transform="rotate(-12 12 17.8)"><ellipse cx="12" cy="17.8" rx="9" ry="3.6"/><ellipse cx="12" cy="17.8" rx="9" ry="3.6" transform="rotate(60 12 17.8)"/><ellipse cx="12" cy="17.8" rx="9" ry="3.6" transform="rotate(120 12 17.8)"/></g><circle cx="12" cy="17.8" r="1.7" fill="#fff"/></svg>
<div class="t" style="left:580.5px;top:503px;font-size:25.0px;line-height:28px;color:#0a0a0a;letter-spacing:0.57px;">comments-post.php</div>
<div class="t" style="left:1170.2px;top:503px;font-size:25.0px;line-height:28px;color:#818181;letter-spacing:-0.87px;">2 KB</div>
<div class="t" style="left:1242.2px;top:503px;font-size:25.0px;line-height:28px;color:#818181;letter-spacing:0.89px;">2016. Aug 29. 13:00</div>
<svg class="b" style="left:536px;top:540.0px;" width="24" height="31" viewBox="0 0 24 31"><path d="M0.4 0.4 H16 L23.6 8 V30.6 H0.4 Z" fill="url(#pg)"/><path d="M16 0.4 L23.6 8 H16 Z" fill="#dff0da"/><g fill="none" stroke="#fff" stroke-width="1.45" transform="rotate(-12 12 17.8)"><ellipse cx="12" cy="17.8" rx="9" ry="3.6"/><ellipse cx="12" cy="17.8" rx="9" ry="3.6" transform="rotate(60 12 17.8)"/><ellipse cx="12" cy="17.8" rx="9" ry="3.6" transform="rotate(120 12 17.8)"/></g><circle cx="12" cy="17.8" r="1.7" fill="#fff"/></svg>
<div class="t" style="left:580.5px;top:543px;font-size:25.0px;line-height:28px;color:#0a0a0a;letter-spacing:0.51px;">config-sample.php</div>
<div class="t" style="left:1170.2px;top:543px;font-size:25.0px;line-height:28px;color:#818181;letter-spacing:-0.87px;">3 KB</div>
<div class="t" style="left:1242.2px;top:543px;font-size:25.0px;line-height:28px;color:#818181;letter-spacing:0.76px;">2015. Dec 16. 9:58</div>
<svg class="b" style="left:536px;top:580.0px;" width="24" height="31" viewBox="0 0 24 31"><path d="M0.4 0.4 H16 L23.6 8 V30.6 H0.4 Z" fill="url(#pg)"/><path d="M16 0.4 L23.6 8 H16 Z" fill="#dff0da"/><g fill="none" stroke="#fff" stroke-width="1.45" transform="rotate(-12 12 17.8)"><ellipse cx="12" cy="17.8" rx="9" ry="3.6"/><ellipse cx="12" cy="17.8" rx="9" ry="3.6" transform="rotate(60 12 17.8)"/><ellipse cx="12" cy="17.8" rx="9" ry="3.6" transform="rotate(120 12 17.8)"/></g><circle cx="12" cy="17.8" r="1.7" fill="#fff"/></svg>
<div class="t" style="left:580.5px;top:583px;font-size:25.0px;line-height:28px;color:#0a0a0a;letter-spacing:0.39px;">cron.php</div>
<div class="t" style="left:1170.2px;top:583px;font-size:25.0px;line-height:28px;color:#818181;letter-spacing:-0.87px;">4 KB</div>
<div class="t" style="left:1242.2px;top:583px;font-size:25.0px;line-height:28px;color:#818181;letter-spacing:0.79px;">2017. Aug 20. 5:37</div>
<svg class="b" style="left:536px;top:620.0px;" width="24" height="31" viewBox="0 0 24 31"><path d="M0.4 0.4 H16 L23.6 8 V30.6 H0.4 Z" fill="url(#pg)"/><path d="M16 0.4 L23.6 8 H16 Z" fill="#dff0da"/><g fill="none" stroke="#fff" stroke-width="1.45" transform="rotate(-12 12 17.8)"><ellipse cx="12" cy="17.8" rx="9" ry="3.6"/><ellipse cx="12" cy="17.8" rx="9" ry="3.6" transform="rotate(60 12 17.8)"/><ellipse cx="12" cy="17.8" rx="9" ry="3.6" transform="rotate(120 12 17.8)"/></g><circle cx="12" cy="17.8" r="1.7" fill="#fff"/></svg>
<div class="t" style="left:580.5px;top:623px;font-size:25.0px;line-height:28px;color:#0a0a0a;letter-spacing:0.20px;">index.php</div>
<div class="t" style="left:1107.5px;top:623px;font-size:25.0px;line-height:28px;color:#818181;letter-spacing:0.74px;">418 bytes</div>
<div class="t" style="left:1242.2px;top:623px;font-size:25.0px;line-height:28px;color:#818181;letter-spacing:0.71px;">2013. Sep 25. 1:18</div>
<svg class="b" style="left:536px;top:660.0px;" width="24" height="31" viewBox="0 0 24 31"><path d="M0.4 0.4 H16 L23.6 8 V30.6 H0.4 Z" fill="url(#pg)"/><path d="M16 0.4 L23.6 8 H16 Z" fill="#dff0da"/><g fill="none" stroke="#fff" stroke-width="1.45" transform="rotate(-12 12 17.8)"><ellipse cx="12" cy="17.8" rx="9" ry="3.6"/><ellipse cx="12" cy="17.8" rx="9" ry="3.6" transform="rotate(60 12 17.8)"/><ellipse cx="12" cy="17.8" rx="9" ry="3.6" transform="rotate(120 12 17.8)"/></g><circle cx="12" cy="17.8" r="1.7" fill="#fff"/></svg>
<div class="t" style="left:580.5px;top:663px;font-size:25.0px;line-height:28px;color:#0a0a0a;letter-spacing:0.24px;">links.php</div>
<div class="t" style="left:1170.2px;top:663px;font-size:25.0px;line-height:28px;color:#818181;letter-spacing:-0.87px;">2 KB</div>
<div class="t" style="left:1242.2px;top:663px;font-size:25.0px;line-height:28px;color:#818181;letter-spacing:0.76px;">2016. Nov 21. 2:46</div>
<svg class="b" style="left:536px;top:700.0px;" width="24" height="31" viewBox="0 0 24 31"><path d="M0.4 0.4 H16 L23.6 8 V30.6 H0.4 Z" fill="url(#pg)"/><path d="M16 0.4 L23.6 8 H16 Z" fill="#dff0da"/><g fill="none" stroke="#fff" stroke-width="1.45" transform="rotate(-12 12 17.8)"><ellipse cx="12" cy="17.8" rx="9" ry="3.6"/><ellipse cx="12" cy="17.8" rx="9" ry="3.6" transform="rotate(60 12 17.8)"/><ellipse cx="12" cy="17.8" rx="9" ry="3.6" transform="rotate(120 12 17.8)"/></g><circle cx="12" cy="17.8" r="1.7" fill="#fff"/></svg>
<div class="t" style="left:580.5px;top:703px;font-size:25.0px;line-height:28px;color:#0a0a0a;letter-spacing:0.22px;">load.php</div>
<div class="t" style="left:1170.2px;top:703px;font-size:25.0px;line-height:28px;color:#818181;letter-spacing:-0.87px;">3 KB</div>
<div class="t" style="left:1242.2px;top:703px;font-size:25.0px;line-height:28px;color:#818181;letter-spacing:0.83px;">2017. Aug 22. 12:52</div>
<div class="b" style="left:1043px;top:706.2px;width:20px;height:20px;border-radius:50%;background:#f7cb3b;border:1.5px solid #f0c02a"></div>
<svg class="b" style="left:536px;top:740.0px;" width="24" height="31" viewBox="0 0 24 31"><path d="M0.4 0.4 H16 L23.6 8 V30.6 H0.4 Z" fill="url(#pg)"/><path d="M16 0.4 L23.6 8 H16 Z" fill="#dff0da"/><g fill="none" stroke="#fff" stroke-width="1.45" transform="rotate(-12 12 17.8)"><ellipse cx="12" cy="17.8" rx="9" ry="3.6"/><ellipse cx="12" cy="17.8" rx="9" ry="3.6" transform="rotate(60 12 17.8)"/><ellipse cx="12" cy="17.8" rx="9" ry="3.6" transform="rotate(120 12 17.8)"/></g><circle cx="12" cy="17.8" r="1.7" fill="#fff"/></svg>
<div class="t" style="left:580.5px;top:743px;font-size:25.0px;line-height:28px;color:#0a0a0a;letter-spacing:0.31px;">login.php</div>
<div class="t" style="left:1154.7px;top:743px;font-size:25.0px;line-height:28px;color:#818181;letter-spacing:-0.25px;">37 KB</div>
<div class="t" style="left:1242.2px;top:743px;font-size:25.0px;line-height:28px;color:#818181;letter-spacing:0.92px;">2017. Oct 13. 3:10</div>
<div class="b" style="left:1043px;top:746.2px;width:20px;height:20px;border-radius:50%;background:#41a9f6;border:1.5px solid #2f9df2"></div>
<svg class="b" style="left:536px;top:780.0px;" width="24" height="31" viewBox="0 0 24 31"><path d="M0.4 0.4 H16 L23.6 8 V30.6 H0.4 Z" fill="url(#pg)"/><path d="M16 0.4 L23.6 8 H16 Z" fill="#dff0da"/><g fill="none" stroke="#fff" stroke-width="1.45" transform="rotate(-12 12 17.8)"><ellipse cx="12" cy="17.8" rx="9" ry="3.6"/><ellipse cx="12" cy="17.8" rx="9" ry="3.6" transform="rotate(60 12 17.8)"/><ellipse cx="12" cy="17.8" rx="9" ry="3.6" transform="rotate(120 12 17.8)"/></g><circle cx="12" cy="17.8" r="1.7" fill="#fff"/></svg>
<div class="t" style="left:580.5px;top:783px;font-size:25.0px;line-height:28px;color:#0a0a0a;letter-spacing:0.17px;">mail.php</div>
<div class="t" style="left:1170.2px;top:783px;font-size:25.0px;line-height:28px;color:#818181;letter-spacing:-0.87px;">8 KB</div>
<div class="t" style="left:1242.2px;top:783px;font-size:25.0px;line-height:28px;color:#818181;letter-spacing:0.83px;">2017. Jan 11. 5:13</div>
<div class="b" style="left:1043px;top:786.2px;width:20px;height:20px;border-radius:50%;background:#9a9a9f;border:1.5px solid #8e8e93"></div>
<svg class="b" style="left:536px;top:820.0px;" width="24" height="31" viewBox="0 0 24 31"><path d="M0.4 0.4 H16 L23.6 8 V30.6 H0.4 Z" fill="url(#pg)"/><path d="M16 0.4 L23.6 8 H16 Z" fill="#dff0da"/><g fill="none" stroke="#fff" stroke-width="1.45" transform="rotate(-12 12 17.8)"><ellipse cx="12" cy="17.8" rx="9" ry="3.6"/><ellipse cx="12" cy="17.8" rx="9" ry="3.6" transform="rotate(60 12 17.8)"/><ellipse cx="12" cy="17.8" rx="9" ry="3.6" transform="rotate(120 12 17.8)"/></g><circle cx="12" cy="17.8" r="1.7" fill="#fff"/></svg>
<div class="t" style="left:580.5px;top:823px;font-size:25.0px;line-height:28px;color:#0a0a0a;letter-spacing:0.51px;">settings.php</div>
<div class="t" style="left:1155.7px;top:823px;font-size:25.0px;line-height:28px;color:#818181;letter-spacing:-0.50px;">16 KB</div>
<div class="t" style="left:1242.2px;top:823px;font-size:25.0px;line-height:28px;color:#818181;letter-spacing:0.86px;">2017. Oct 4. 1:20</div>
<div class="b" style="left:1043px;top:826.2px;width:20px;height:20px;border-radius:50%;background:#d281e2;border:1.5px solid #c873da"></div>
<svg class="b" style="left:536px;top:860.0px;" width="24" height="31" viewBox="0 0 24 31"><path d="M0.4 0.4 H16 L23.6 8 V30.6 H0.4 Z" fill="url(#pg)"/><path d="M16 0.4 L23.6 8 H16 Z" fill="#dff0da"/><g fill="none" stroke="#fff" stroke-width="1.45" transform="rotate(-12 12 17.8)"><ellipse cx="12" cy="17.8" rx="9" ry="3.6"/><ellipse cx="12" cy="17.8" rx="9" ry="3.6" transform="rotate(60 12 17.8)"/><ellipse cx="12" cy="17.8" rx="9" ry="3.6" transform="rotate(120 12 17.8)"/></g><circle cx="12" cy="17.8" r="1.7" fill="#fff"/></svg>
<div class="t" style="left:580.5px;top:863px;font-size:25.0px;line-height:28px;color:#0a0a0a;letter-spacing:0.27px;">signup.php</div>
<div class="t" style="left:1154.7px;top:863px;font-size:25.0px;line-height:28px;color:#818181;letter-spacing:-0.25px;">30 KB</div>
<div class="t" style="left:1242.2px;top:863px;font-size:25.0px;line-height:28px;color:#818181;letter-spacing:0.93px;">2017. Oct 18. 18:36</div>
<div class="b" style="left:1043px;top:866.2px;width:20px;height:20px;border-radius:50%;background:#f95c4e;border:1.5px solid #f4513f"></div>
<svg class="b" style="left:536px;top:900.0px;" width="24" height="31" viewBox="0 0 24 31"><path d="M0.4 0.4 H16 L23.6 8 V30.6 H0.4 Z" fill="url(#pg)"/><path d="M16 0.4 L23.6 8 H16 Z" fill="#dff0da"/><g fill="none" stroke="#fff" stroke-width="1.45" transform="rotate(-12 12 17.8)"><ellipse cx="12" cy="17.8" rx="9" ry="3.6"/><ellipse cx="12" cy="17.8" rx="9" ry="3.6" transform="rotate(60 12 17.8)"/><ellipse cx="12" cy="17.8" rx="9" ry="3.6" transform="rotate(120 12 17.8)"/></g><circle cx="12" cy="17.8" r="1.7" fill="#fff"/></svg>
<div class="t" style="left:580.5px;top:903px;font-size:25.0px;line-height:28px;color:#0a0a0a;letter-spacing:0.49px;">trackback.php</div>
<div class="t" style="left:1170.2px;top:903px;font-size:25.0px;line-height:28px;color:#818181;letter-spacing:-0.87px;">5 KB</div>
<div class="t" style="left:1242.2px;top:903px;font-size:25.0px;line-height:28px;color:#818181;letter-spacing:0.89px;">2017. Oct 23. 23:12</div>
<svg class="b" style="left:536px;top:940.0px;" width="24" height="31" viewBox="0 0 24 31"><path d="M0.4 0.4 H16 L23.6 8 V30.6 H0.4 Z" fill="url(#pg)"/><path d="M16 0.4 L23.6 8 H16 Z" fill="#dff0da"/><g fill="none" stroke="#fff" stroke-width="1.45" transform="rotate(-12 12 17.8)"><ellipse cx="12" cy="17.8" rx="9" ry="3.6"/><ellipse cx="12" cy="17.8" rx="9" ry="3.6" transform="rotate(60 12 17.8)"/><ellipse cx="12" cy="17.8" rx="9" ry="3.6" transform="rotate(120 12 17.8)"/></g><circle cx="12" cy="17.8" r="1.7" fill="#fff"/></svg>
<div class="t" style="left:580.5px;top:943px;font-size:25.0px;line-height:28px;color:#0a0a0a;letter-spacing:0.46px;">xmlrpc.php</div>
<div class="t" style="left:1170.2px;top:943px;font-size:25.0px;line-height:28px;color:#818181;letter-spacing:-0.87px;">3 KB</div>
<div class="t" style="left:1242.2px;top:943px;font-size:25.0px;line-height:28px;color:#818181;letter-spacing:0.78px;">2016. Aug 31. 17:31</div>
<div class="t" style="left:856.9px;top:1572px;font-size:22.11px;line-height:25px;color:#848484;letter-spacing:0.40px;">17 items, 56,87 GB available</div>
<div class="t" style="left:1798.9px;top:1572px;font-size:22.11px;line-height:25px;color:#848484;letter-spacing:0.42px;">1 of 12 selected (1,3 MB), 56,87 GB available</div>
<div class="b" style="left:2366px;top:1581.6px;width:156px;height:5.2px;border-radius:3px;background:#c6c6c6"></div>
<div class="b" style="left:2366px;top:1581.6px;width:40px;height:5.2px;border-radius:3px;background:#2f8df5"></div>
<div class="b" style="left:2398.6px;top:1572.8px;width:22.8px;height:22.8px;border-radius:50%;background:#fff;box-shadow:0 0 0 1px rgba(0,0,0,.16),0 1.5px 2px rgba(0,0,0,.25)"></div>
<div class="b" style="left:1547px;top:1100px;width:294px;height:294px;border-radius:9px;background:#e4e4e4"></div>
<div class="b" style="left:1567.7px;top:327.8px;width:252.6px;height:176.4px;background:#fff;box-shadow:0 0 0 1px rgba(0,0,0,.13),0 3px 6px rgba(0,0,0,.30),0 6px 12px rgba(0,0,0,.10)"></div>
<svg class="b" style="left:1579.2px;top:339.2px" width="229.6" height="153.4" viewBox="0 0 230 153" preserveAspectRatio="none"><defs><linearGradient id="abS" x1="0" y1="0" x2="1" y2="0.5"><stop offset="0" stop-color="#257ccf"/><stop offset="0.2" stop-color="#4592d8"/><stop offset="0.6" stop-color="#559cdc"/><stop offset="1" stop-color="#5d9fdc"/></linearGradient><radialGradient id="abC" cx="0" cy="1" r="0.5"><stop offset="0" stop-color="#bccde6"/><stop offset="0.5" stop-color="#e4ebf5" stop-opacity="0.8"/><stop offset="1" stop-color="#fff" stop-opacity="0"/></radialGradient><linearGradient id="abB" x1="0" y1="0" x2="1" y2="0.55" spreadMethod="repeat" gradientUnits="userSpaceOnUse" gradientTransform="translate(140 50) scale(26 26)"><stop offset="0" stop-color="#f46a45"/><stop offset="0.18" stop-color="#f46a45"/><stop offset="0.18" stop-color="#63ab6a"/><stop offset="0.34" stop-color="#63ab6a"/><stop offset="0.34" stop-color="#27509f"/><stop offset="0.52" stop-color="#27509f"/><stop offset="0.52" stop-color="#f6dc12"/><stop offset="0.8" stop-color="#f6dc12"/><stop offset="0.8" stop-color="#f0603c"/><stop offset="1" stop-color="#f0603c"/></linearGradient><filter id="abF" x="-10%" y="-10%" width="120%" height="120%"><feGaussianBlur stdDeviation="1.8"/></filter></defs><rect width="230" height="153" fill="url(#abS)"/><g fill="#fff" filter="url(#abF)"><path d="M-6 102 Q6 96 14 90 Q22 82 30 76 Q38 69 48 68.5 Q58 69 66 74 Q76 78 79 88 Q80 96 86 102 Q94 94 102 88 Q112 80 124 76 Q132 72 136 68 Q134 56 142 49 Q152 43 162 47 Q168 50 172 56 L190 56 Q204 54 216 57 Q226 60 236 68 V160 H-6 Z"/><circle cx="40" cy="92" r="22"/><circle cx="120" cy="100" r="26"/><circle cx="205" cy="82" r="24"/><rect x="-4" y="108" width="240" height="50"/></g><rect x="0" y="60" width="230" height="93" fill="url(#abC)"/><ellipse cx="222" cy="70" rx="10" ry="6" fill="#9fc0e4" opacity="0.6" filter="url(#abF)"/><path d="M144 72 Q144 52 168.6 51.6 Q193.4 52 193.4 72 Q193 88 174.5 107.5 H163.5 Q144.4 88 144 72 Z" fill="url(#abB)"/><path d="M144 72 Q144 52 168.6 51.6 Q156 58 154 76 Q154 92 165 107.5 H163.5 Q144.4 88 144 72 Z" fill="#f2a13a" opacity="0.4"/><path d="M174.5 107.5 Q193 88 193.4 72 Q193.4 60 186 55 Q190 70 184 86 Q180 98 172 107.5 Z" fill="#1f3f80" opacity="0.3"/><rect x="166.8" y="109" width="4.6" height="5.4" fill="#c8663e"/></svg>
<div class="b" style="left:1579.2px;top:339.2px;width:229.6px;height:153.4px;box-shadow:inset 0 0 0 1px rgba(20,30,50,.28)"></div>
<div class="b" style="left:1905.7px;top:328.7px;width:252.6px;height:175.5px;background:#fff;box-shadow:0 0 0 1px rgba(0,0,0,.13),0 3px 6px rgba(0,0,0,.30),0 6px 12px rgba(0,0,0,.10)"></div>
<svg class="b" style="left:1917.2px;top:340.1px" width="229.6" height="152.5" viewBox="0 0 230 153" preserveAspectRatio="none"><defs><radialGradient id="auG" cx="0.46" cy="0.6" r="0.8"><stop offset="0" stop-color="#d46a18"/><stop offset="0.35" stop-color="#c0400e"/><stop offset="1" stop-color="#982806"/></radialGradient><linearGradient id="auP" x1="0" y1="0" x2="0" y2="1"><stop offset="0" stop-color="#f1deb0"/><stop offset="1" stop-color="#ecd6b8"/></linearGradient><filter id="auF" x="0" y="0" width="100%" height="100%" color-interpolation-filters="sRGB"><feTurbulence type="fractalNoise" baseFrequency="0.13 0.15" numOctaves="3" seed="7" result="n"/><feColorMatrix in="n" type="matrix" values="0 0 0 0 0.361 0 0 0 0 0.071 0 0 0 0 0.008 2.8 0 0 0 -1.4" result="d"/><feColorMatrix in="n" type="matrix" values="0 0 0 0 0.949 0 0 0 0 0.596 0 0 0 0 0.165 0 2.6 0 0 -1.45" result="l"/><feMerge result="m"><feMergeNode in="SourceGraphic"/><feMergeNode in="d"/><feMergeNode in="l"/></feMerge><feComposite in="m" in2="SourceGraphic" operator="in"/></filter><filter id="auF2" x="0" y="0" width="100%" height="100%" color-interpolation-filters="sRGB"><feTurbulence type="fractalNoise" baseFrequency="0.2 0.28" numOctaves="3" seed="2" result="n"/><feColorMatrix in="n" type="matrix" values="0 0 0 0 0.659 0 0 0 0 0.204 0 0 0 0 0.063 2.8 0 0 0 -1.4" result="d"/><feColorMatrix in="n" type="matrix" values="0 0 0 0 0.957 0 0 0 0 0.902 0 0 0 0 0.800 0 2.4 0 0 -1.45" result="l"/><feMerge result="m"><feMergeNode in="SourceGraphic"/><feMergeNode in="d"/><feMergeNode in="l"/></feMerge><feComposite in="m" in2="SourceGraphic" operator="in"/></filter><filter id="auB" x="-20%" y="-20%" width="140%" height="140%"><feGaussianBlur stdDeviation="4"/></filter></defs><g filter="url(#auF)"><rect width="230" height="153" fill="url(#auG)"/><g filter="url(#auB)"><ellipse cx="62" cy="20" rx="44" ry="20" fill="#e0781c" opacity="0.85"/><ellipse cx="66" cy="92" rx="16" ry="24" fill="#f0a024"/><ellipse cx="125" cy="100" rx="52" ry="10" fill="#d8821c"/><ellipse cx="108" cy="80" rx="14" ry="20" fill="#70404a" opacity="0.6"/><ellipse cx="216" cy="36" rx="18" ry="34" fill="#6a4a14" opacity="0.75"/><ellipse cx="150" cy="40" rx="44" ry="32" fill="#b8300a" opacity="0.8"/><ellipse cx="14" cy="60" rx="20" ry="30" fill="#a42c0a" opacity="0.8"/><ellipse cx="10" cy="103" rx="14" ry="10" fill="#8b7a6c"/></g></g><g stroke="#160c08" stroke-linecap="round" fill="none"><path d="M34 30 Q32 70 25 116" stroke-width="5.5"/><path d="M52 19 Q52 60 45 115" stroke-width="6.5"/><path d="M50 56 Q42 58 36 64" stroke-width="2"/><path d="M34 34 Q28 28 22 26" stroke-width="1.6"/><path d="M188 3 Q190 50 196 97" stroke-width="5"/><path d="M206 0 Q207 50 209 88" stroke-width="6" stroke="#1f1410"/><path d="M227 32 V62" stroke-width="4"/><path d="M145 6 Q158 20 161 32" stroke-width="2.4"/><path d="M176 52 Q186 62 194 64" stroke-width="2.6"/><path d="M161 32 Q150 30 142 34" stroke-width="1.4"/></g><g stroke="#4a2c34" stroke-width="1.5" opacity="0.8"><path d="M80 84 V96"/><path d="M88 80 V98"/><path d="M96 84 V94"/><path d="M103 70 V96"/><path d="M108 66 V101"/><path d="M113 72 V96"/><path d="M130 88 V101"/><path d="M137 86 V101"/><path d="M149 88 V104"/><path d="M155 92 V103"/><path d="M163 90 V104"/><path d="M172 88 V103"/><path d="M178 92 V102"/></g><g filter="url(#auF2)"><path d="M0 114 Q40 110 80 108 Q120 104 180 108 L230 66 V153 H0 Z" fill="#c4581a"/><path d="M180 108 L230 66 V153 H176 Q186 130 180 108 Z" fill="#b8601c"/><path d="M82 106 Q110 102 128 108 Q150 112 154 116 Q150 122 128 124 Q108 128 104 140 Q104 148 116 153 H30 Q40 138 70 128 Q100 120 122 116 Q104 110 82 106 Z" fill="url(#auP)"/><path d="M0 142 Q40 136 70 140 L60 153 H0 Z" fill="#e8c8a8" opacity="0.7"/></g><ellipse cx="100" cy="108" rx="20" ry="4" fill="#9aa83a" opacity="0.55"/></svg>
<div class="b" style="left:1917.2px;top:340.1px;width:229.6px;height:152.5px;box-shadow:inset 0 0 0 1px rgba(20,30,50,.28)"></div>
<div class="b" style="left:2243.7px;top:328.7px;width:252.6px;height:175.5px;background:#fff;box-shadow:0 0 0 1px rgba(0,0,0,.13),0 3px 6px rgba(0,0,0,.30),0 6px 12px rgba(0,0,0,.10)"></div>
<svg class="b" style="left:2255.2px;top:340.1px" width="229.6" height="152.5" viewBox="0 0 230 153" preserveAspectRatio="none"><defs><linearGradient id="beS" x1="0" y1="0" x2="0" y2="1"><stop offset="0" stop-color="#1a4a9e"/><stop offset="0.35" stop-color="#2f68bc"/><stop offset="0.5" stop-color="#3f86d4"/><stop offset="0.6" stop-color="#bfdcf0"/><stop offset="0.6" stop-color="#5b86aa"/><stop offset="0.63" stop-color="#9cd9d6"/><stop offset="0.8" stop-color="#b5e6d6"/><stop offset="1" stop-color="#c4e0c4"/></linearGradient><linearGradient id="beSd" x1="0" y1="0" x2="1" y2="0.2"><stop offset="0" stop-color="#ece6c8"/><stop offset="0.3" stop-color="#faf2d8"/><stop offset="1" stop-color="#fdf8e8"/></linearGradient><filter id="beF" x="0" y="0" width="100%" height="100%" color-interpolation-filters="sRGB"><feTurbulence type="fractalNoise" baseFrequency="0.4 0.4" numOctaves="2" seed="5" result="n"/><feColorMatrix in="n" type="matrix" values="0 0 0 0 0.184 0 0 0 0 0.361 0 0 0 0 0.063 2.8 0 0 0 -1.35" result="d"/><feColorMatrix in="n" type="matrix" values="0 0 0 0 0.784 0 0 0 0 0.863 0 0 0 0 0.314 0 2.6 0 0 -1.45" result="l"/><feMerge result="m"><feMergeNode in="SourceGraphic"/><feMergeNode in="d"/><feMergeNode in="l"/></feMerge><feComposite in="m" in2="SourceGraphic" operator="in"/></filter><filter id="beCl" x="0" y="0" width="100%" height="100%" color-interpolation-filters="sRGB"><feTurbulence type="fractalNoise" baseFrequency="0.05 0.09" numOctaves="3" seed="9" result="n"/><feColorMatrix in="n" type="matrix" values="0 0 0 0 0.184 0 0 0 0 0.408 0 0 0 0 0.737 3.6 0 0 0 -2.0" result="d"/><feMerge result="m"><feMergeNode in="SourceGraphic"/><feMergeNode in="d"/></feMerge><feComposite in="m" in2="SourceGraphic" operator="in"/></filter><filter id="beB" x="-10%" y="-10%" width="120%" height="120%"><feGaussianBlur stdDeviation="1.6"/></filter></defs><rect width="230" height="153" fill="url(#beS)"/><g filter="url(#beB)"><g filter="url(#beCl)" fill="#eef0f4"><path d="M6 0 H42 L84 36 Q104 40 120 44 Q130 50 128 62 Q110 70 90 62 Q70 54 56 50 Q30 56 8 44 Q-4 30 2 14 Z"/><path d="M0 66 Q8 62 14 70 L0 72 Z M26 74 Q38 66 50 76 Q60 80 52 84 H24 Z M0 80 Q20 76 40 84 Q60 82 80 86 Q100 84 122 88 V91 H0 Z M64 72 Q74 66 82 74 Q96 70 104 78 H66 Z"/></g><path d="M150 0 L156 0 L136 44 L128 50 Z" fill="#dfe8f4" opacity="0.75"/><path d="M96 6 L100 6 L110 34 L104 34 Z" fill="#b9cfea" opacity="0.45"/><ellipse cx="128" cy="72" rx="14" ry="16" fill="#e4eef8" opacity="0.8"/></g><path d="M122 96 L230 100 V153 H40 Q70 128 122 96 Z" fill="url(#beSd)"/><path d="M122 96 Q80 118 40 153 H0 V148 Q60 118 110 94 Z" fill="#d9dcc0" opacity="0.7"/><ellipse cx="184" cy="113" rx="15" ry="6.5" fill="#9a9c84" opacity="0.85"/><ellipse cx="170" cy="101" rx="28" ry="3" fill="#b8b49a" opacity="0.8"/><g filter="url(#beF)"><path d="M121 93 Q128 82 137 75 Q144 66 152 64 Q156 54 164 52 Q170 44 178 44 Q182 34 192 34 Q198 26 208 28 Q216 24 230 26 V118 Q214 112 198 108 V101 Q170 100 140 98 Q128 97 121 96 Z" fill="#78aa22"/><path d="M204 30 Q216 32 230 28 V56 Q212 54 204 44 Z" fill="#9cc644"/><path d="M176 52 Q186 44 198 50 Q190 58 182 62 Z M204 70 Q216 66 230 72 V80 Q216 80 204 70 Z M150 80 Q160 74 170 80 Q160 88 150 86 Z" fill="#3f6a14" opacity="0.8"/><path d="M188 30 Q180 18 168 18 Q178 14 188 22 Q186 10 178 4 Q190 8 192 20 Q198 8 210 6 Q200 14 196 24 Q208 18 218 22 Q206 24 198 30 Z" fill="#5c9a1e"/><path d="M214 22 Q208 10 198 6 Q210 4 218 14 Q220 4 230 0 V30 Q222 24 214 22 Z" fill="#6aa626"/></g><path d="M192 20 Q190 30 188 42" stroke="#5a4a2a" stroke-width="1.4" fill="none"/><g stroke="#4d7a1c" stroke-width="1.3" fill="none"><path d="M128 74 Q127 62 126.5 58"/><path d="M146 72 Q146 64 146.4 60"/></g><g fill="#4f8a1e"><path d="M126.5 58 Q118 54 113 58 Q120 52 126.5 56 Q126 50 122 48 Q128 49 128 55 Q132 50 138 52 Q132 54 129 57 Q136 58 139 63 Q132 59 126.5 58 Z"/><path d="M146.4 60 Q139 57 135 61 Q140 55 146.4 58 Q146 52 143 50 Q148 52 148 57 Q152 53 157 55 Q152 57 149 60 Q155 61 157 65 Q151 61 146.4 60 Z"/></g></svg>
<div class="b" style="left:2255.2px;top:340.1px;width:229.6px;height:152.5px;box-shadow:inset 0 0 0 1px rgba(20,30,50,.28)"></div>
<div class="b" style="left:1567.7px;top:742.7px;width:252.6px;height:175.5px;background:#fff;box-shadow:0 0 0 1px rgba(0,0,0,.13),0 3px 6px rgba(0,0,0,.30),0 6px 12px rgba(0,0,0,.10)"></div>
<svg class="b" style="left:1579.2px;top:754.1px" width="229.6" height="152.5" viewBox="0 0 230 153" preserveAspectRatio="none"><defs><linearGradient id="blS" x1="0" y1="0" x2="0.9" y2="0.5"><stop offset="0" stop-color="#5686e0"/><stop offset="0.4" stop-color="#7ba6ee"/><stop offset="1" stop-color="#9cc0f8"/></linearGradient><linearGradient id="blH" x1="0" y1="0" x2="0" y2="1"><stop offset="0" stop-color="#cfe0fa" stop-opacity="0"/><stop offset="1" stop-color="#cfe0fa" stop-opacity="0.9"/></linearGradient><linearGradient id="blY" x1="0" y1="0" x2="0" y2="1"><stop offset="0" stop-color="#eee21c"/><stop offset="0.5" stop-color="#efe20e"/><stop offset="1" stop-color="#e4d60c"/></linearGradient><filter id="blF" x="0" y="0" width="100%" height="100%" color-interpolation-filters="sRGB"><feTurbulence type="fractalNoise" baseFrequency="0.3 0.22" numOctaves="3" seed="12" result="n"/><feColorMatrix in="n" type="matrix" values="0 0 0 0 0.435 0 0 0 0 0.541 0 0 0 0 0.063 2.6 0 0 0 -1.5" result="d"/><feColorMatrix in="n" type="matrix" values="0 0 0 0 0.992 0 0 0 0 0.949 0 0 0 0 0.188 0 2.4 0 0 -1.2" result="l"/><feMerge result="m"><feMergeNode in="SourceGraphic"/><feMergeNode in="d"/><feMergeNode in="l"/></feMerge><feComposite in="m" in2="SourceGraphic" operator="in"/></filter><filter id="blC" x="0" y="0" width="100%" height="100%" color-interpolation-filters="sRGB"><feTurbulence type="fractalNoise" baseFrequency="0.07 0.1" numOctaves="3" seed="4" result="n"/><feColorMatrix in="n" type="matrix" values="0 0 0 0 0.663 0 0 0 0 0.745 0 0 0 0 0.863 3.2 0 0 0 -1.7" result="d"/><feMerge result="m"><feMergeNode in="SourceGraphic"/><feMergeNode in="d"/></feMerge><feComposite in="m" in2="SourceGraphic" operator="in"/></filter><filter id="blB" x="-10%" y="-10%" width="120%" height="120%"><feGaussianBlur stdDeviation="1.4"/></filter><linearGradient id="blD" x1="0" y1="0" x2="0" y2="1"><stop offset="0" stop-color="#5a7a08" stop-opacity="0"/><stop offset="1" stop-color="#5a7a08" stop-opacity="0.3"/></linearGradient></defs><rect width="230" height="76" fill="url(#blS)"/><rect y="40" width="230" height="36" fill="url(#blH)"/><g filter="url(#blB)"><g filter="url(#blC)" fill="#fff"><path d="M0 56 Q10 52 20 56 Q24 50 34 52 Q38 44 46 44 Q54 46 54 54 Q64 50 70 58 Q84 58 96 56 Q104 48 116 46 Q128 44 134 50 Q142 46 150 44 Q156 36 168 38 Q176 38 180 44 Q182 28 196 24 Q206 20 216 24 Q226 24 230 28 V76 H0 Z"/><ellipse cx="105" cy="36" rx="10" ry="7"/><ellipse cx="130" cy="20" rx="11" ry="5"/><ellipse cx="6" cy="18" rx="10" ry="5" opacity="0.5"/></g></g><g filter="url(#blF)"><path d="M0 75 Q60 73 120 76 Q180 72 230 73 V153 H0 Z" fill="url(#blY)"/></g><rect y="110" width="230" height="43" fill="url(#blD)"/></svg>
<div class="b" style="left:1579.2px;top:754.1px;width:229.6px;height:152.5px;box-shadow:inset 0 0 0 1px rgba(20,30,50,.28)"></div>
<div class="b" style="left:1905.7px;top:742.7px;width:252.6px;height:175.5px;background:#fff;box-shadow:0 0 0 1px rgba(0,0,0,.13),0 3px 6px rgba(0,0,0,.30),0 6px 12px rgba(0,0,0,.10)"></div>
<svg class="b" style="left:1917.2px;top:754.1px" width="229.6" height="152.5" viewBox="0 0 230 153" preserveAspectRatio="none"><defs><radialGradient id="clS" cx="0.52" cy="0.15" r="0.8" gradientTransform="scale(1 0.8)"><stop offset="0" stop-color="#80606c"/><stop offset="0.45" stop-color="#6a4450"/><stop offset="1" stop-color="#32151a"/></radialGradient><linearGradient id="clH" x1="0" y1="0" x2="0" y2="1"><stop offset="0" stop-color="#e8683c" stop-opacity="0"/><stop offset="0.55" stop-color="#f08a62" stop-opacity="0.9"/><stop offset="1" stop-color="#f9b896"/></linearGradient><radialGradient id="clW" cx="0.62" cy="0.38" r="0.7" gradientTransform="scale(1 0.9)"><stop offset="0" stop-color="#e2b09c"/><stop offset="0.4" stop-color="#c09088"/><stop offset="0.8" stop-color="#80545c"/><stop offset="1" stop-color="#5a3440"/></radialGradient><filter id="clR" x="0" y="0" width="100%" height="100%" color-interpolation-filters="sRGB"><feTurbulence type="fractalNoise" baseFrequency="0.22 0.26" numOctaves="2" seed="6" result="n"/><feColorMatrix in="n" type="matrix" values="0 0 0 0 0.165 0 0 0 0 0.102 0 0 0 0 0.125 3.0 0 0 0 -1.5" result="d"/><feColorMatrix in="n" type="matrix" values="0 0 0 0 0.753 0 0 0 0 0.675 0 0 0 0 0.682 0 3.0 0 0 -1.55" result="l"/><feMerge result="m"><feMergeNode in="SourceGraphic"/><feMergeNode in="d"/><feMergeNode in="l"/></feMerge><feComposite in="m" in2="SourceGraphic" operator="in"/></filter><filter id="clK" x="0" y="0" width="100%" height="100%" color-interpolation-filters="sRGB"><feTurbulence type="fractalNoise" baseFrequency="0.06 0.16" numOctaves="3" seed="14" result="n"/><feColorMatrix in="n" type="matrix" values="0 0 0 0 0.290 0 0 0 0 0.110 0 0 0 0 0.125 3.0 0 0 0 -1.55" result="d"/><feColorMatrix in="n" type="matrix" values="0 0 0 0 0.941 0 0 0 0 0.502 0 0 0 0 0.282 0 2.8 0 0 -1.6" result="l"/><feMerge result="m"><feMergeNode in="SourceGraphic"/><feMergeNode in="d"/><feMergeNode in="l"/></feMerge><feComposite in="m" in2="SourceGraphic" operator="in"/></filter><filter id="clB" x="-20%" y="-20%" width="140%" height="140%"><feGaussianBlur stdDeviation="2"/></filter></defs><rect width="230" height="78" fill="url(#clS)"/><rect y="44" width="230" height="34" fill="url(#clH)"/><g filter="url(#clB)"><g filter="url(#clK)"><path d="M0 18 Q14 20 26 30 Q30 38 22 40 Q10 40 0 36 Z" fill="#c8321c"/><path d="M20 44 Q36 40 48 50 Q44 58 32 58 Q22 54 20 44 Z" fill="#b83018"/><path d="M58 48 Q66 38 80 38 Q88 42 84 52 Q74 60 60 58 Z" fill="#e4552e"/><path d="M74 66 Q90 58 106 54 Q100 62 86 68 Z" fill="#f0783c"/><path d="M108 64 Q150 46 196 42 Q214 40 230 38 V62 Q200 60 170 62 Q140 64 112 70 Z" fill="#d84a2a"/><path d="M150 36 Q190 20 230 18 V40 Q190 42 156 50 Z" fill="#5a2226"/></g><ellipse cx="186" cy="67" rx="28" ry="5.5" fill="#fde2b4"/><ellipse cx="40" cy="73" rx="40" ry="3" fill="#f8a484"/><ellipse cx="140" cy="46" rx="12" ry="5" fill="#a8786c" opacity="0.6"/></g><rect y="77" width="230" height="76" fill="url(#clW)"/><path d="M110 76 Q150 72 190 73 Q212 71 230 72 V79 H110 Z" fill="#5c3440" opacity="0.85"/><rect y="76.4" width="230" height="1.6" fill="#4c2630" opacity="0.9"/><g filter="url(#clR)"><path d="M0 87 Q20 90 34 96 Q44 98 47 101 Q30 106 18 112 Q14 118 24 124 Q40 124 52 130 Q62 140 74 144 Q100 138 112 146 L116 153 H0 Z" fill="#68484e"/></g></svg>
<div class="b" style="left:1917.2px;top:754.1px;width:229.6px;height:152.5px;box-shadow:inset 0 0 0 1px rgba(20,30,50,.28)"></div>
<div class="b" style="left:2243.7px;top:742.7px;width:252.6px;height:174.4px;background:#fff;box-shadow:0 0 0 1px rgba(0,0,0,.13),0 3px 6px rgba(0,0,0,.30),0 6px 12px rgba(0,0,0,.10)"></div>
<svg class="b" style="left:2255.2px;top:754.1px" width="229.6" height="151.4" viewBox="0 0 230 152" preserveAspectRatio="none"><defs><linearGradient id="deS" x1="0.8" y1="0" x2="0.2" y2="1"><stop offset="0" stop-color="#5f86f8"/><stop offset="0.5" stop-color="#789ff6"/><stop offset="1" stop-color="#a4ccf8"/></linearGradient><linearGradient id="deD" x1="0" y1="0" x2="1" y2="0.3"><stop offset="0" stop-color="#c4804a"/><stop offset="0.5" stop-color="#cc8a52"/><stop offset="1" stop-color="#c98348"/></linearGradient><linearGradient id="deL" x1="0" y1="0" x2="0" y2="1"><stop offset="0" stop-color="#a05e34"/><stop offset="1" stop-color="#8c4c26"/></linearGradient><linearGradient id="deG" x1="0" y1="0" x2="0" y2="1"><stop offset="0" stop-color="#f9f7f5"/><stop offset="1" stop-color="#f3eee8"/></linearGradient></defs><rect width="230" height="152" fill="url(#deS)"/><path d="M0 76 Q30 74 66 73.4 Q100 70 120 67 Q134 65.4 146 67 Q166 72 190 75.5 Q212 78 230 79.5 V122 H0 Z" fill="url(#deD)"/><path d="M0 76 Q18 77 34 79.5 Q60 90 84 106 Q98 114 108 120 H0 Z" fill="url(#deL)"/><rect y="119.6" width="230" height="32.4" fill="url(#deG)"/><path d="M160 128.4 H230 V132 H176 Z" fill="#a9a9b4" opacity="0.8"/><g stroke="#38241a" stroke-linecap="round" fill="none" transform="translate(14.5 12.6) scale(0.905)"><path d="M150 128 Q146 112 146 96 Q142 80 138 62" stroke-width="4"/><path d="M156 128 Q160 108 162 92 Q164 70 158 48" stroke-width="3.8"/><path d="M153 128 Q152 112 153 100" stroke-width="4"/><path d="M146 126 Q138 112 134 98 Q124 90 112 86" stroke-width="2.8"/><path d="M134 98 Q130 90 124 82" stroke-width="2"/><path d="M128 94 Q122 84 120 80" stroke-width="1.6"/><path d="M162 92 Q176 84 191 78.6" stroke-width="2.4"/><path d="M160 102 Q174 96 188 92.6" stroke-width="2.2"/><path d="M160 106 Q176 104 186 98" stroke-width="1.8"/><path d="M138 62 Q130 58 126 59" stroke-width="2"/><path d="M144 84 Q140 70 150 56" stroke-width="2.2"/><path d="M162 66 Q170 58 176 52" stroke-width="1.8"/><path d="M158 48 Q164 44 171 41" stroke-width="1.6"/><path d="M161 72 Q168 68 178 64" stroke-width="1.8"/><path d="M158 48 L156 40 M150 56 L148 50" stroke-width="1.5"/></g><g stroke="#38241a" stroke-linecap="round" fill="none"><path d="M11 124 V112 M9 118 L7 110 M13 120 L15 114" stroke-width="1.4"/><path d="M63.6 123 V104 M63.6 112 L60 106 M64 116 L67 112" stroke-width="1.5"/><path d="M72 122 V116 M75.5 123 V114 M46 122 V118 M50 121 V116" stroke-width="1.3"/></g><path d="M142 129 Q152 120 162 129 Q152 131.5 142 129 Z" fill="#2a1a12"/></svg>
<div class="b" style="left:2255.2px;top:754.1px;width:229.6px;height:151.4px;box-shadow:inset 0 0 0 1px rgba(20,30,50,.28)"></div>
<div class="b" style="left:1905.7px;top:1156.6px;width:252.6px;height:175.6px;background:#fff;box-shadow:0 0 0 1px rgba(0,0,0,.13),0 3px 6px rgba(0,0,0,.30),0 6px 12px rgba(0,0,0,.10)"></div>
<svg class="b" style="left:1917.2px;top:1168.1px" width="229.6" height="152.5" viewBox="0 0 230 153" preserveAspectRatio="none"><defs><linearGradient id="moS" x1="0" y1="0" x2="0.3" y2="1"><stop offset="0" stop-color="#1f58ac"/><stop offset="0.6" stop-color="#3f7fd0"/><stop offset="1" stop-color="#7aaee8"/></linearGradient><linearGradient id="moL" x1="0" y1="0" x2="1" y2="1"><stop offset="0" stop-color="#5fb8a8"/><stop offset="0.5" stop-color="#3596a2"/><stop offset="1" stop-color="#55aa9c"/></linearGradient><filter id="moR" x="0" y="0" width="100%" height="100%" color-interpolation-filters="sRGB"><feTurbulence type="fractalNoise" baseFrequency="0.12 0.3" numOctaves="3" seed="3" result="n"/><feColorMatrix in="n" type="matrix" values="0 0 0 0 0.110 0 0 0 0 0.094 0 0 0 0 0.086 2.6 0 0 0 -1.15" result="d"/><feColorMatrix in="n" type="matrix" values="0 0 0 0 0.949 0 0 0 0 0.949 0 0 0 0 0.949 0 3.6 0 0 -2.1" result="l"/><feMerge result="m"><feMergeNode in="SourceGraphic"/><feMergeNode in="d"/><feMergeNode in="l"/></feMerge><feComposite in="m" in2="SourceGraphic" operator="in"/></filter><filter id="moG" x="0" y="0" width="100%" height="100%" color-interpolation-filters="sRGB"><feTurbulence type="fractalNoise" baseFrequency="0.2 0.26" numOctaves="3" seed="8" result="n"/><feColorMatrix in="n" type="matrix" values="0 0 0 0 0.157 0 0 0 0 0.212 0 0 0 0 0.063 2.8 0 0 0 -1.25" result="d"/><feColorMatrix in="n" type="matrix" values="0 0 0 0 0.690 0 0 0 0 0.800 0 0 0 0 0.220 0 2.4 0 0 -1.5" result="l"/><feMerge result="m"><feMergeNode in="SourceGraphic"/><feMergeNode in="d"/><feMergeNode in="l"/></feMerge><feComposite in="m" in2="SourceGraphic" operator="in"/></filter><filter id="moD" x="0" y="0" width="100%" height="100%" color-interpolation-filters="sRGB"><feTurbulence type="fractalNoise" baseFrequency="0.3 0.3" numOctaves="2" seed="18" result="n"/><feColorMatrix in="n" type="matrix" values="0 0 0 0 0.110 0 0 0 0 0.086 0 0 0 0 0.039 2.6 0 0 0 -1.3" result="d"/><feColorMatrix in="n" type="matrix" values="0 0 0 0 0.478 0 0 0 0 0.502 0 0 0 0 0.188 0 2.4 0 0 -1.45" result="l"/><feMerge result="m"><feMergeNode in="SourceGraphic"/><feMergeNode in="d"/><feMergeNode in="l"/></feMerge><feComposite in="m" in2="SourceGraphic" operator="in"/></filter><filter id="moC" x="0" y="0" width="100%" height="100%" color-interpolation-filters="sRGB"><feTurbulence type="fractalNoise" baseFrequency="0.08 0.1" numOctaves="3" seed="2" result="n"/><feColorMatrix in="n" type="matrix" values="0 0 0 0 0.604 0 0 0 0 0.612 0 0 0 0 0.651 3.2 0 0 0 -1.8" result="d"/><feMerge result="m"><feMergeNode in="SourceGraphic"/><feMergeNode in="d"/></feMerge><feComposite in="m" in2="SourceGraphic" operator="in"/></filter><filter id="moB" x="-10%" y="-10%" width="120%" height="120%"><feGaussianBlur stdDeviation="1.3"/></filter></defs><rect width="230" height="60" fill="url(#moS)"/><g filter="url(#moB)"><g filter="url(#moC)" fill="#fbfbfb"><path d="M118 0 H230 V12 Q222 16 212 12 Q216 22 206 24 Q204 34 192 40 Q178 44 164 40 Q152 34 158 26 Q148 22 140 14 Q128 10 118 0 Z"/><path d="M56 6 Q62 0 68 6 Q78 8 76 14 Q68 18 60 16 Q54 12 56 6 Z M92 26 Q98 18 106 22 Q110 14 118 16 Q128 18 130 26 Q140 28 138 34 Q120 36 104 32 Q94 32 92 26 Z"/><path d="M0 34 Q8 34 14 38 Q30 36 50 38 Q64 36 78 40 L70 46 H0 Z"/></g></g><g filter="url(#moR)"><path d="M0 39 Q10 38 20 40 Q36 42 47 43.5 Q60 40 72 38.5 Q80 37 86.8 36 L92 39 L100 37 L108 33 L114 35 L126.5 39.5 L138.4 36 L146 40 L155.7 43.5 L179.5 44.8 L200 45.5 L216.6 44.8 L229.6 39.5 V100 H0 Z" fill="#4c4642"/></g><g filter="url(#moG)"><path d="M0 62 Q14 58 26 62 Q40 66 52 72 Q70 78 90 86 Q110 90 134 92 Q150 88 166 84 Q184 76 198 70 L230 62 V153 H0 Z" fill="#688a26"/><path d="M108 100 Q130 96 150 92 Q170 88 186 90 Q178 108 160 122 Q140 124 112 118 Q96 112 108 100 Z" fill="#a2c232"/><path d="M0 56 Q12 54 24 60 Q30 70 22 84 Q10 90 0 88 Z" fill="#a6ae84"/><path d="M0 110 Q20 104 40 112 Q60 118 66 128 Q50 140 30 150 L0 153 Z" fill="#587a20"/></g><g filter="url(#moD)"><path d="M14 90 Q36 68 70 62 Q92 66 104 80 Q84 90 56 90 Q30 96 14 90 Z" fill="#3a3826"/><path d="M229.6 39.5 Q212 54 198 70 Q184 88 172 108 Q166 126 172 140 Q176 148 179.5 153 H230 Z" fill="#382f18"/><path d="M0 92 Q16 90 30 98 Q20 108 0 112 Z" fill="#2f3018"/></g><path d="M84 90 Q100 86 120 85 Q130 84.5 134.5 86 Q126 92 112 95 Q100 97 92 96 Q86 94 84 90 Z" fill="#73c4b4"/><path d="M65.6 120 Q70 117 76 117.6 Q96 118 113 122 Q124 122 130.5 124 Q126 128 127.8 133.5 Q132 144 138.4 153 H31 Q44 140 55 129.6 Q62 126 65.6 120 Z" fill="url(#moL)"/><path d="M16 152 Q30 142 44 136 Q54 128 62 124" stroke="#d8d8b0" stroke-width="1.2" fill="none" opacity="0.8"/></svg>
<div class="b" style="left:1917.2px;top:1168.1px;width:229.6px;height:152.5px;box-shadow:inset 0 0 0 1px rgba(20,30,50,.28)"></div>
<div class="b" style="left:2243.7px;top:1155.7px;width:252.6px;height:176.5px;background:#fff;box-shadow:0 0 0 1px rgba(0,0,0,.13),0 3px 6px rgba(0,0,0,.30),0 6px 12px rgba(0,0,0,.10)"></div>
<svg class="b" style="left:2255.2px;top:1167.2px" width="229.6" height="153.4" viewBox="0 0 230 153" preserveAspectRatio="none"><defs><radialGradient id="raS" cx="0.76" cy="0.21" r="0.5"><stop offset="0" stop-color="#fff6d8"/><stop offset="0.07" stop-color="#fde08a"/><stop offset="0.2" stop-color="#f8b848"/><stop offset="0.6" stop-color="#f0a030"/><stop offset="1" stop-color="#e08a24"/></radialGradient><linearGradient id="raM" x1="0" y1="0" x2="1" y2="1"><stop offset="0" stop-color="#7a5030"/><stop offset="0.5" stop-color="#a06c50"/><stop offset="1" stop-color="#8a5838"/></linearGradient><linearGradient id="raT" x1="0" y1="0" x2="1" y2="0"><stop offset="0" stop-color="#36500f"/><stop offset="0.4" stop-color="#4a4410"/><stop offset="0.75" stop-color="#5c3a0e"/><stop offset="1" stop-color="#6a3a10"/></linearGradient><linearGradient id="raR" x1="0" y1="0" x2="1" y2="0"><stop offset="0" stop-color="#f0b030"/><stop offset="0.5" stop-color="#c07a18"/><stop offset="1" stop-color="#3a2008"/></linearGradient><radialGradient id="raH" cx="0.74" cy="0.35" r="0.45"><stop offset="0" stop-color="#f09a30" stop-opacity="0.6"/><stop offset="1" stop-color="#f09a30" stop-opacity="0"/></radialGradient><filter id="raF" x="0" y="0" width="100%" height="100%" color-interpolation-filters="sRGB"><feTurbulence type="fractalNoise" baseFrequency="0.26 0.3" numOctaves="3" seed="5" result="n"/><feColorMatrix in="n" type="matrix" values="0 0 0 0 0.125 0 0 0 0 0.094 0 0 0 0 0.016 2.6 0 0 0 -1.3" result="d"/><feColorMatrix in="n" type="matrix" values="0 0 0 0 0.478 0 0 0 0 0.541 0 0 0 0 0.141 0 2.6 0 0 -1.6" result="l"/><feMerge result="m"><feMergeNode in="SourceGraphic"/><feMergeNode in="d"/><feMergeNode in="l"/></feMerge><feComposite in="m" in2="SourceGraphic" operator="in"/></filter><filter id="raG" x="0" y="0" width="100%" height="100%" color-interpolation-filters="sRGB"><feTurbulence type="fractalNoise" baseFrequency="0.5 0.5" numOctaves="2" seed="2" result="n"/><feColorMatrix in="n" type="matrix" values="0 0 0 0 0.227 0 0 0 0 0.180 0 0 0 0 0.188 2.6 0 0 0 -1.35" result="d"/><feColorMatrix in="n" type="matrix" values="0 0 0 0 0.659 0 0 0 0 0.596 0 0 0 0 0.612 0 2.6 0 0 -1.45" result="l"/><feMerge result="m"><feMergeNode in="SourceGraphic"/><feMergeNode in="d"/><feMergeNode in="l"/></feMerge><feComposite in="m" in2="SourceGraphic" operator="in"/></filter></defs><rect width="230" height="153" fill="url(#raS)"/><path d="M0 0 H64 Q68 12 73.5 20.5 Q82 30 90.7 33.8 Q102 36 113 36.4 L150 44 L170 60 H0 Z" fill="url(#raM)"/><path d="M0 0 H28 Q60 30 96 44 L0 60 Z" fill="#5a4420" opacity="0.7"/><g filter="url(#raF)"><path d="M0 22 Q10 20 16 24 Q24 30 34 36 Q50 44 66 50 Q76 40 90 40 Q104 42 116 44 Q130 40 142 42 Q152 46 160 44 Q170 40 178 44 Q188 30 190 20 Q192 8 187 0 H230 V104 H0 Z" fill="url(#raT)"/><path d="M0 108 Q40 100 80 98 L118 96 L0 144 Z" fill="#7c6a20"/><path d="M131 96 L170 96 Q200 96 230 100 V127 Z" fill="#72621c"/></g><rect width="230" height="110" fill="url(#raH)"/><g filter="url(#raG)"><path d="M118.6 96 H130.5 L229.6 126.5 V153 H0 V143.7 Z" fill="#7c6a70"/></g><path d="M121 97 H128 L190 153 H78 Z" fill="#5e4636" opacity="0.85"/><rect x="119.0" y="104.0" width="15.0" height="1.2" fill="#9a7c66" opacity="0.7"/><rect x="115.1" y="109.0" width="23.6" height="1.4" fill="#9a7c66" opacity="0.7"/><rect x="110.5" y="115.0" width="34.0" height="1.6" fill="#9a7c66" opacity="0.7"/><rect x="105.0" y="122.0" width="46.0" height="1.9" fill="#9a7c66" opacity="0.7"/><rect x="98.8" y="130.0" width="59.8" height="2.2" fill="#9a7c66" opacity="0.7"/><rect x="91.7" y="139.0" width="75.2" height="2.5" fill="#9a7c66" opacity="0.7"/><rect x="83.9" y="149.0" width="92.4" height="2.8" fill="#9a7c66" opacity="0.7"/><path d="M119 96.5 L120.6 96.5 L71 153 H58 Z" fill="url(#raR)"/><path d="M128.4 97 L130 97 L208 153 H195 Z" fill="url(#raR)"/><path d="M120.6 96.5 L122 96.5 L82 153 H71 Z" fill="#3a2410" opacity="0.8"/><path d="M127 97 L128.4 97 L195 153 H184 Z" fill="#3a2410" opacity="0.8"/><rect x="110" y="89" width="48" height="2.6" fill="#5a4418" opacity="0.7"/></svg>
<div class="b" style="left:2255.2px;top:1167.2px;width:229.6px;height:153.4px;box-shadow:inset 0 0 0 1px rgba(20,30,50,.28)"></div>
<div class="b" style="left:1567.7px;top:1158.5px;width:252.6px;height:170.6px;background:#fff;box-shadow:0 0 0 1px rgba(0,0,0,.13),0 3px 6px rgba(0,0,0,.30),0 6px 12px rgba(0,0,0,.10)"></div>
<svg class="b" style="left:2566px;top:572.3px" width="460" height="297.4" viewBox="0 0 460 298" preserveAspectRatio="none"><g id="lakeAll"><defs><linearGradient id="lkSky" x1="0" y1="0" x2="0.2" y2="1"><stop offset="0" stop-color="#0d569c"/><stop offset="0.3" stop-color="#1466b4"/><stop offset="0.6" stop-color="#2a83d0"/><stop offset="0.78" stop-color="#4798de"/><stop offset="1" stop-color="#66ace8"/></linearGradient><linearGradient id="lkDk" x1="0" y1="0" x2="1" y2="0"><stop offset="0.3" stop-color="#03305e" stop-opacity="0"/><stop offset="1" stop-color="#03305e" stop-opacity="0.3"/></linearGradient><radialGradient id="lkGlow" cx="0.02" cy="0.78" r="0.45"><stop offset="0" stop-color="#b5dcfb" stop-opacity="0.95"/><stop offset="0.5" stop-color="#8cc4f2" stop-opacity="0.5"/><stop offset="1" stop-color="#6cb0ea" stop-opacity="0"/></radialGradient><linearGradient id="lkW" x1="0" y1="0" x2="0" y2="1"><stop offset="0" stop-color="#061a0a" stop-opacity="0.42"/><stop offset="0.25" stop-color="#0a3a6a" stop-opacity="0.1"/><stop offset="0.7" stop-color="#0b4f9a" stop-opacity="0.32"/><stop offset="1" stop-color="#0a3f86" stop-opacity="0.6"/></linearGradient><radialGradient id="lkR" cx="0.95" cy="0.95" r="0.4" gradientTransform="scale(1 1)"><stop offset="0" stop-color="#3a5a28" stop-opacity="0.6"/><stop offset="0.6" stop-color="#2f5f45" stop-opacity="0.3"/><stop offset="1" stop-color="#2f5f45" stop-opacity="0"/></radialGradient><filter id="lkF" x="0" y="0" width="100%" height="100%" color-interpolation-filters="sRGB"><feTurbulence type="fractalNoise" baseFrequency="0.32 0.4" numOctaves="2" seed="4" result="n"/><feColorMatrix in="n" type="matrix" values="0 0 0 0 0.071 0 0 0 0 0.173 0 0 0 0 0.031 2.4 0 0 0 -1.25" result="d"/><feColorMatrix in="n" type="matrix" values="0 0 0 0 0.690 0 0 0 0 0.784 0 0 0 0 0.251 0 2.2 0 0 -1.3" result="l"/><feMerge result="m"><feMergeNode in="SourceGraphic"/><feMergeNode in="d"/><feMergeNode in="l"/></feMerge><feComposite in="m" in2="SourceGraphic" operator="in"/></filter><filter id="lkK" x="0" y="0" width="100%" height="100%" color-interpolation-filters="sRGB"><feTurbulence type="fractalNoise" baseFrequency="0.2 0.3" numOctaves="2" seed="9" result="n"/><feColorMatrix in="n" type="matrix" values="0 0 0 0 0.353 0 0 0 0 0.376 0 0 0 0 0.408 2.4 0 0 0 -1.3" result="d"/><feColorMatrix in="n" type="matrix" values="0 0 0 0 0.941 0 0 0 0 0.941 0 0 0 0 0.941 0 2.4 0 0 -1.4" result="l"/><feMerge result="m"><feMergeNode in="SourceGraphic"/><feMergeNode in="d"/><feMergeNode in="l"/></feMerge><feComposite in="m" in2="SourceGraphic" operator="in"/></filter><filter id="lkB" x="-5%" y="-5%" width="110%" height="110%"><feGaussianBlur stdDeviation="1.2 0.8"/></filter><clipPath id="lkC"><rect x="0" y="152" width="460" height="146"/></clipPath><g id="lkTop"><rect width="460" height="153" fill="url(#lkSky)"/><rect width="460" height="153" fill="url(#lkDk)"/><rect width="460" height="153" fill="url(#lkGlow)"/><g filter="url(#lkK)"><path d="M0 114 L4 112.5 L8 118 L20 119 L38 116 L46 104 L58 99 L70 96.5 L82 94.5 L89 99 L93 107 L100 101 L110 95.5 L126 92 L134 94 L142 101 L158 103 L170 104 L176 102 L176 152 L0 152 Z" fill="#8793a8"/><path d="M46 104 L58 99 L70 96.5 L76 110 L60 116 L44 118 Z M110 95.5 L126 92 L134 94 L138 108 L112 112 Z" fill="#a4acb9"/><path d="M0 122 L30 120 L60 124 L176 118 L176 152 L0 152 Z" fill="#587f8c"/><path d="M170 106 L178 98 L190 90 L200 84.5 L206 83 L214 84.5 L222 87 L232 88.5 L244 85.5 L256 82 L263 79 L265 70 L268 62 L272 56 L276 50 L279.5 45.5 L283 43 L286 43.4 L289 47 L290.5 53 L294 56.5 L299 55 L304 56 L310 58.5 L318 64 L325 71 L331 79 L336 85 L341 88.5 L346 90.5 L352 93 L362 93.5 L372 95 L380 98 L392 100 L392 152 L170 152 Z" fill="#b6b7b8"/><path d="M263 79 L265 70 L268 62 L272 56 L276 50 L279.5 45.5 L283 43 L286 43.4 L284 60 L279 78 L272 86 Z" fill="#a59e90"/><path d="M286 43.4 L289 47 L290.5 53 L294 56.5 L299 55 L304 56 L310 58.5 L318 64 L325 71 L331 79 L322 80 L306 76 L292 78 L279 78 L284 60 Z" fill="#7c7e86"/><path d="M279 78 L292 78 L306 76 L322 80 L340 88 L352 93 L372 95 L380 100 L340 108 L300 112 L262 110 L240 102 L256 90 Z" fill="#d4d5d6"/><path d="M178 98 L190 90 L200 84.5 L206 83 L214 84.5 L222 87 L232 88.5 L226 98 L204 104 L186 108 Z" fill="#96968e"/><path d="M170 110 L200 104 L226 100 L250 104 L262 110 L240 120 L200 126 L170 128 Z" fill="#a5a899"/><path d="M196 128 L226 118 L244 116 L262 120 L232 130 L200 136 Z" fill="#77818b"/><path d="M400 98 L412 92 L426 86 L440 80 L452 71 L460 66 L460 112 L400 112 Z" fill="#cbc6b5"/></g><g filter="url(#lkF)"><path d="M176 136 L215 130 L250 124 L290 120 L330 112 L370 102 L400 96 L430 90 L461 92 L461 153 L176 153 Z" fill="#5d8c1c"/><path d="M210.3 128.5 Q209.0 133.1 206.9 137.0 Q205.7 139.4 206.2 140.6 H210.3 Z" fill="#3c6a14"/><path d="M210.3 128.5 Q211.6 133.1 213.7 137.0 Q214.9 139.4 214.4 140.6 H209.5 Q210.1 134.6 210.3 128.5 Z" fill="#79a622"/><path d="M190.0 128.7 Q188.6 133.5 186.3 137.6 Q185.1 140.1 185.6 141.4 H190.0 Z" fill="#3c6a14"/><path d="M190.0 128.7 Q191.4 133.5 193.7 137.6 Q194.9 140.1 194.4 141.4 H189.1 Q189.8 135.0 190.0 128.7 Z" fill="#79a622"/><path d="M205.1 129.9 Q203.7 134.4 201.4 138.2 Q200.2 140.5 200.7 141.7 H205.1 Z" fill="#3c6a14"/><path d="M205.1 129.9 Q206.4 134.4 208.7 138.2 Q209.9 140.5 209.4 141.7 H204.2 Q204.9 135.8 205.1 129.9 Z" fill="#79a622"/><path d="M196.3 127.9 Q195.2 133.3 193.4 137.8 Q192.4 140.7 192.8 142.1 H196.3 Z" fill="#3c6a14"/><path d="M196.3 127.9 Q197.5 133.3 199.3 137.8 Q200.3 140.7 199.9 142.1 H195.6 Q196.2 135.0 196.3 127.9 Z" fill="#79a622"/><path d="M226.6 128.7 Q224.9 133.8 222.1 138.1 Q220.6 140.8 221.2 142.1 H226.6 Z" fill="#3c6a14"/><path d="M226.6 128.7 Q228.3 133.8 231.1 138.1 Q232.5 140.8 231.9 142.1 H225.5 Q226.4 135.4 226.6 128.7 Z" fill="#79a622"/><path d="M232.7 124.6 Q231.1 131.5 228.6 137.3 Q227.3 140.9 227.9 142.7 H232.7 Z" fill="#3c6a14"/><path d="M232.7 124.6 Q234.2 131.5 236.7 137.3 Q238.1 140.9 237.5 142.7 H231.7 Q232.5 133.7 232.7 124.6 Z" fill="#79a622"/><path d="M238.2 124.2 Q236.6 131.3 233.9 137.2 Q232.4 140.9 233.1 142.7 H238.2 Z" fill="#3c6a14"/><path d="M238.2 124.2 Q239.9 131.3 242.5 137.2 Q244.0 140.9 243.4 142.7 H237.2 Q238.0 133.5 238.2 124.2 Z" fill="#79a622"/><path d="M201.2 129.6 Q199.7 134.7 197.3 138.9 Q195.9 141.6 196.5 142.9 H201.2 Z" fill="#3c6a14"/><path d="M201.2 129.6 Q202.7 134.7 205.2 138.9 Q206.5 141.6 205.9 142.9 H200.3 Q201.0 136.3 201.2 129.6 Z" fill="#79a622"/><path d="M253.9 124.5 Q252.4 131.5 249.8 137.5 Q248.4 141.1 249.0 143.0 H253.9 Z" fill="#3c6a14"/><path d="M253.9 124.5 Q255.5 131.5 258.0 137.5 Q259.4 141.1 258.8 143.0 H252.9 Q253.7 133.8 253.9 124.5 Z" fill="#79a622"/><path d="M220.5 130.5 Q219.2 135.3 217.2 139.3 Q216.1 141.8 216.6 143.0 H220.5 Z" fill="#3c6a14"/><path d="M220.5 130.5 Q221.7 135.3 223.7 139.3 Q224.8 141.8 224.3 143.0 H219.7 Q220.3 136.8 220.5 130.5 Z" fill="#79a622"/><path d="M248.6 128.9 Q247.1 134.3 244.6 138.9 Q243.3 141.7 243.8 143.1 H248.6 Z" fill="#3c6a14"/><path d="M248.6 128.9 Q250.1 134.3 252.6 138.9 Q253.9 141.7 253.4 143.1 H247.7 Q248.4 136.0 248.6 128.9 Z" fill="#79a622"/><path d="M216.5 130.9 Q215.0 135.6 212.4 139.5 Q211.1 142.0 211.7 143.2 H216.5 Z" fill="#3c6a14"/><path d="M216.5 130.9 Q218.1 135.6 220.6 139.5 Q222.0 142.0 221.4 143.2 H215.6 Q216.3 137.1 216.5 130.9 Z" fill="#79a622"/><path d="M276.4 122.2 Q274.7 130.8 272.1 138.0 Q270.7 142.5 271.3 144.8 H276.4 Z" fill="#3c6a14"/><path d="M276.4 122.2 Q278.0 130.8 280.6 138.0 Q282.0 142.5 281.4 144.8 H275.4 Q276.2 133.5 276.4 122.2 Z" fill="#79a622"/><path d="M272.7 125.5 Q271.2 133.0 268.8 139.2 Q267.5 143.2 268.0 145.1 H272.7 Z" fill="#3c6a14"/><path d="M272.7 125.5 Q274.2 133.0 276.7 139.2 Q278.0 143.2 277.4 145.1 H271.8 Q272.5 135.3 272.7 125.5 Z" fill="#79a622"/><path d="M244.6 129.8 Q243.1 135.6 240.6 140.6 Q239.3 143.6 239.8 145.2 H244.6 Z" fill="#3c6a14"/><path d="M244.6 129.8 Q246.1 135.6 248.6 140.6 Q250.0 143.6 249.4 145.2 H243.7 Q244.4 137.5 244.6 129.8 Z" fill="#79a622"/><path d="M263.3 130.3 Q261.3 136.1 258.2 141.0 Q256.5 144.1 257.2 145.6 H263.3 Z" fill="#3c6a14"/><path d="M263.3 130.3 Q265.2 136.1 268.4 141.0 Q270.1 144.1 269.4 145.6 H262.1 Q263.1 138.0 263.3 130.3 Z" fill="#79a622"/><path d="M258.4 128.0 Q256.8 134.7 254.2 140.4 Q252.8 143.9 253.4 145.7 H258.4 Z" fill="#3c6a14"/><path d="M258.4 128.0 Q259.9 134.7 262.5 140.4 Q263.9 143.9 263.3 145.7 H257.4 Q258.2 136.9 258.4 128.0 Z" fill="#79a622"/><path d="M298.8 125.6 Q296.8 133.2 293.6 139.7 Q291.9 143.7 292.6 145.7 H298.8 Z" fill="#3c6a14"/><path d="M298.8 125.6 Q300.8 133.2 304.0 139.7 Q305.7 143.7 305.0 145.7 H297.5 Q298.5 135.6 298.8 125.6 Z" fill="#79a622"/><path d="M266.9 125.1 Q265.4 133.0 263.0 139.7 Q261.7 143.9 262.2 145.9 H266.9 Z" fill="#3c6a14"/><path d="M266.9 125.1 Q268.3 133.0 270.7 139.7 Q272.0 143.9 271.5 145.9 H265.9 Q266.7 135.5 266.9 125.1 Z" fill="#79a622"/><path d="M286.7 124.1 Q285.1 132.5 282.4 139.7 Q281.0 144.1 281.6 146.3 H286.7 Z" fill="#3c6a14"/><path d="M286.7 124.1 Q288.3 132.5 291.0 139.7 Q292.4 144.1 291.8 146.3 H285.7 Q286.5 135.2 286.7 124.1 Z" fill="#79a622"/><path d="M282.1 124.3 Q280.4 133.0 277.6 140.4 Q276.1 145.0 276.7 147.3 H282.1 Z" fill="#3c6a14"/><path d="M282.1 124.3 Q283.9 133.0 286.7 140.4 Q288.2 145.0 287.5 147.3 H281.1 Q281.9 135.8 282.1 124.3 Z" fill="#79a622"/><path d="M292.4 124.0 Q290.8 132.9 288.2 140.4 Q286.8 145.1 287.4 147.5 H292.4 Z" fill="#3c6a14"/><path d="M292.4 124.0 Q294.1 132.9 296.7 140.4 Q298.1 145.1 297.5 147.5 H291.4 Q292.2 135.7 292.4 124.0 Z" fill="#79a622"/><path d="M380 140 L410 118 L440 104 L461 98 L461 153 L364 153 Z" fill="#93b233"/><path d="M404 142 L461 116 L461 130 L424 148 Z" fill="#cfcdbd"/><path d="M459.1 69.3 Q455.7 85.9 450.0 99.8 Q447.0 108.6 448.3 112.9 H459.1 Z" fill="#3a6614"/><path d="M459.1 69.3 Q462.6 85.9 468.2 99.8 Q471.3 108.6 470.0 112.9 H457.0 Q458.7 91.1 459.1 69.3 Z" fill="#86ae24"/><path d="M448.5 67.1 Q445.5 86.6 440.7 103.1 Q438.2 113.3 439.3 118.5 H448.5 Z" fill="#3a6614"/><path d="M448.5 67.1 Q451.4 86.6 456.2 103.1 Q458.7 113.3 457.6 118.5 H446.6 Q448.1 92.8 448.5 67.1 Z" fill="#86ae24"/><path d="M440.7 69.0 Q437.2 88.3 431.3 104.5 Q428.2 114.7 429.5 119.7 H440.7 Z" fill="#3a6614"/><path d="M440.7 69.0 Q444.3 88.3 450.1 104.5 Q453.3 114.7 451.9 119.7 H438.5 Q440.3 94.4 440.7 69.0 Z" fill="#86ae24"/><path d="M432.8 79.0 Q429.7 95.2 424.6 108.9 Q421.9 117.4 423.0 121.7 H432.8 Z" fill="#3a6614"/><path d="M432.8 79.0 Q436.0 95.2 441.1 108.9 Q443.8 117.4 442.6 121.7 H430.9 Q432.4 100.4 432.8 79.0 Z" fill="#86ae24"/><path d="M420.1 92.2 Q417.1 105.6 412.2 117.0 Q409.6 124.0 410.7 127.5 H420.1 Z" fill="#3a6614"/><path d="M420.1 92.2 Q423.1 105.6 428.0 117.0 Q430.6 124.0 429.5 127.5 H418.2 Q419.7 109.9 420.1 92.2 Z" fill="#86ae24"/><path d="M412.5 92.1 Q409.6 106.3 404.8 118.3 Q402.2 125.8 403.3 129.6 H412.5 Z" fill="#3a6614"/><path d="M412.5 92.1 Q415.5 106.3 420.3 118.3 Q422.9 125.8 421.8 129.6 H410.7 Q412.2 110.8 412.5 92.1 Z" fill="#86ae24"/><path d="M400.0 101.0 Q397.3 113.0 392.9 123.1 Q390.5 129.4 391.5 132.6 H400.0 Z" fill="#3a6614"/><path d="M400.0 101.0 Q402.7 113.0 407.1 123.1 Q409.5 129.4 408.5 132.6 H398.3 Q399.7 116.8 400.0 101.0 Z" fill="#86ae24"/><path d="M400.4 107.6 Q397.5 122.7 392.8 135.4 Q390.2 143.3 391.3 147.2 H400.4 Z" fill="#3a6614"/><path d="M400.4 107.6 Q403.3 122.7 408.1 135.4 Q410.6 143.3 409.5 147.2 H398.6 Q400.1 127.4 400.4 107.6 Z" fill="#86ae24"/><path d="M383.4 103.5 Q379.8 120.2 374.0 134.2 Q370.9 143.0 372.2 147.3 H383.4 Z" fill="#3a6614"/><path d="M383.4 103.5 Q386.9 120.2 392.7 134.2 Q395.9 143.0 394.5 147.3 H381.2 Q382.9 125.4 383.4 103.5 Z" fill="#86ae24"/><path d="M364.5 102.6 Q361.7 120.1 357.3 134.9 Q354.9 144.2 355.9 148.8 H364.5 Z" fill="#3a6614"/><path d="M364.5 102.6 Q367.2 120.1 371.6 134.9 Q374.0 144.2 373.0 148.8 H362.7 Q364.1 125.7 364.5 102.6 Z" fill="#86ae24"/><path d="M389.9 108.9 Q386.6 124.1 381.2 136.8 Q378.3 144.8 379.6 148.8 H389.9 Z" fill="#3a6614"/><path d="M389.9 108.9 Q393.2 124.1 398.6 136.8 Q401.5 144.8 400.3 148.8 H387.8 Q389.5 128.9 389.9 108.9 Z" fill="#86ae24"/><path d="M347.8 113.2 Q344.8 126.7 339.9 138.2 Q337.2 145.3 338.4 148.9 H347.8 Z" fill="#3a6614"/><path d="M347.8 113.2 Q350.8 126.7 355.7 138.2 Q358.3 145.3 357.2 148.9 H345.9 Q347.4 131.0 347.8 113.2 Z" fill="#86ae24"/><path d="M357.4 115.1 Q354.7 128.2 350.2 139.2 Q347.8 146.1 348.9 149.5 H357.4 Z" fill="#3a6614"/><path d="M357.4 115.1 Q360.2 128.2 364.6 139.2 Q367.0 146.1 366.0 149.5 H355.7 Q357.1 132.3 357.4 115.1 Z" fill="#86ae24"/><path d="M327.4 120.0 Q324.7 131.4 320.3 141.0 Q318.0 147.0 319.0 150.1 H327.4 Z" fill="#3a6614"/><path d="M327.4 120.0 Q330.0 131.4 334.4 141.0 Q336.8 147.0 335.8 150.1 H325.7 Q327.0 135.0 327.4 120.0 Z" fill="#86ae24"/><path d="M306.4 119.0 Q303.6 130.8 299.0 140.8 Q296.6 147.0 297.7 150.1 H306.4 Z" fill="#3a6614"/><path d="M306.4 119.0 Q309.2 130.8 313.7 140.8 Q316.1 147.0 315.1 150.1 H304.6 Q306.0 134.6 306.4 119.0 Z" fill="#86ae24"/><path d="M374.9 113.7 Q371.9 127.6 367.1 139.3 Q364.5 146.6 365.6 150.2 H374.9 Z" fill="#3a6614"/><path d="M374.9 113.7 Q377.9 127.6 382.8 139.3 Q385.4 146.6 384.3 150.2 H373.1 Q374.6 131.9 374.9 113.7 Z" fill="#86ae24"/><path d="M338.0 110.3 Q335.4 125.6 331.0 138.6 Q328.7 146.7 329.7 150.7 H338.0 Z" fill="#3a6614"/><path d="M338.0 110.3 Q340.7 125.6 345.1 138.6 Q347.4 146.7 346.4 150.7 H336.4 Q337.7 130.5 338.0 110.3 Z" fill="#86ae24"/><path d="M312.7 117.9 Q310.5 130.7 307.0 141.5 Q305.0 148.2 305.9 151.5 H312.7 Z" fill="#3a6614"/><path d="M312.7 117.9 Q314.9 130.7 318.5 141.5 Q320.4 148.2 319.6 151.5 H311.4 Q312.5 134.7 312.7 117.9 Z" fill="#86ae24"/><path d="M320.6 118.6 Q317.8 131.2 313.3 141.8 Q310.8 148.4 311.9 151.7 H320.6 Z" fill="#3a6614"/><path d="M320.6 118.6 Q323.4 131.2 328.0 141.8 Q330.4 148.4 329.4 151.7 H318.9 Q320.3 135.1 320.6 118.6 Z" fill="#86ae24"/><path d="M296.0 124.0 Q293.9 134.6 290.4 143.5 Q288.5 149.1 289.3 151.9 H296.0 Z" fill="#3a6614"/><path d="M296.0 124.0 Q298.1 134.6 301.6 143.5 Q303.5 149.1 302.7 151.9 H294.7 Q295.7 137.9 296.0 124.0 Z" fill="#86ae24"/><path d="M0 140 L40 136 L120 138 L184 142 L200 148 L215 153 L0 153 Z" fill="#1c3a0e"/><path d="M22.0 117.0 Q19.5 129.1 15.5 139.2 Q13.4 145.5 14.3 148.7 H22.0 Z" fill="#152c08"/><path d="M22.0 117.0 Q24.5 129.1 28.5 139.2 Q30.6 145.5 29.7 148.7 H20.5 Q21.7 132.9 22.0 117.0 Z" fill="#5c8a18"/><path d="M42.4 119.6 Q39.3 130.7 34.4 140.0 Q31.8 145.9 32.9 148.8 H42.4 Z" fill="#152c08"/><path d="M42.4 119.6 Q45.4 130.7 50.4 140.0 Q53.0 145.9 51.9 148.8 H40.5 Q42.0 134.2 42.4 119.6 Z" fill="#5c8a18"/><path d="M171.7 116.1 Q168.2 128.6 162.5 139.0 Q159.4 145.6 160.7 148.9 H171.7 Z" fill="#152c08"/><path d="M171.7 116.1 Q175.3 128.6 181.0 139.0 Q184.1 145.6 182.7 148.9 H169.5 Q171.3 132.5 171.7 116.1 Z" fill="#5c8a18"/><path d="M78.1 120.6 Q75.0 131.4 70.0 140.4 Q67.3 146.1 68.4 148.9 H78.1 Z" fill="#152c08"/><path d="M78.1 120.6 Q81.2 131.4 86.3 140.4 Q89.0 146.1 87.8 148.9 H76.2 Q77.7 134.7 78.1 120.6 Z" fill="#5c8a18"/><path d="M98.3 110.3 Q95.4 125.1 90.8 137.5 Q88.4 145.3 89.4 149.2 H98.3 Z" fill="#152c08"/><path d="M98.3 110.3 Q101.1 125.1 105.7 137.5 Q108.2 145.3 107.1 149.2 H96.5 Q97.9 129.8 98.3 110.3 Z" fill="#5c8a18"/><path d="M125.0 114.6 Q122.2 127.9 117.5 139.0 Q115.0 146.0 116.1 149.5 H125.0 Z" fill="#152c08"/><path d="M125.0 114.6 Q127.9 127.9 132.5 139.0 Q135.0 146.0 133.9 149.5 H123.2 Q124.7 132.1 125.0 114.6 Z" fill="#5c8a18"/><path d="M134.5 107.5 Q131.3 123.6 126.1 137.1 Q123.3 145.5 124.5 149.8 H134.5 Z" fill="#152c08"/><path d="M134.5 107.5 Q137.7 123.6 142.8 137.1 Q145.6 145.5 144.4 149.8 H132.5 Q134.1 128.6 134.5 107.5 Z" fill="#5c8a18"/><path d="M31.6 123.1 Q29.3 133.3 25.7 141.9 Q23.8 147.2 24.6 149.9 H31.6 Z" fill="#152c08"/><path d="M31.6 123.1 Q33.8 133.3 37.4 141.9 Q39.3 147.2 38.5 149.9 H30.2 Q31.3 136.5 31.6 123.1 Z" fill="#5c8a18"/><path d="M58.3 112.5 Q55.6 126.7 51.2 138.7 Q48.8 146.2 49.8 149.9 H58.3 Z" fill="#152c08"/><path d="M58.3 112.5 Q61.1 126.7 65.5 138.7 Q67.9 146.2 66.9 149.9 H56.6 Q58.0 131.2 58.3 112.5 Z" fill="#5c8a18"/><path d="M68.6 121.7 Q65.7 132.5 60.9 141.5 Q58.3 147.2 59.4 150.0 H68.6 Z" fill="#152c08"/><path d="M68.6 121.7 Q71.6 132.5 76.4 141.5 Q79.0 147.2 77.9 150.0 H66.8 Q68.3 135.9 68.6 121.7 Z" fill="#5c8a18"/><path d="M162.3 115.8 Q158.9 128.9 153.3 139.8 Q150.2 146.7 151.5 150.1 H162.3 Z" fill="#152c08"/><path d="M162.3 115.8 Q165.8 128.9 171.4 139.8 Q174.4 146.7 173.1 150.1 H160.2 Q161.9 133.0 162.3 115.8 Z" fill="#5c8a18"/><path d="M87.0 111.0 Q84.0 125.9 79.1 138.4 Q76.4 146.2 77.6 150.2 H87.0 Z" fill="#152c08"/><path d="M87.0 111.0 Q90.0 125.9 94.9 138.4 Q97.5 146.2 96.4 150.2 H85.1 Q86.6 130.6 87.0 111.0 Z" fill="#5c8a18"/><path d="M51.2 118.1 Q48.4 130.4 43.9 140.8 Q41.4 147.3 42.5 150.5 H51.2 Z" fill="#152c08"/><path d="M51.2 118.1 Q54.0 130.4 58.6 140.8 Q61.0 147.3 60.0 150.5 H49.5 Q50.9 134.3 51.2 118.1 Z" fill="#5c8a18"/><path d="M145.8 106.5 Q142.6 123.2 137.3 137.3 Q134.5 146.2 135.7 150.6 H145.8 Z" fill="#152c08"/><path d="M145.8 106.5 Q149.0 123.2 154.3 137.3 Q157.1 146.2 155.9 150.6 H143.8 Q145.4 128.5 145.8 106.5 Z" fill="#5c8a18"/><path d="M153.0 106.4 Q149.5 123.2 143.8 137.3 Q140.8 146.2 142.1 150.6 H153.0 Z" fill="#152c08"/><path d="M153.0 106.4 Q156.4 123.2 162.1 137.3 Q165.1 146.2 163.8 150.6 H150.8 Q152.5 128.5 153.0 106.4 Z" fill="#5c8a18"/><path d="M109.6 120.1 Q107.0 131.7 102.8 141.5 Q100.5 147.6 101.5 150.6 H109.6 Z" fill="#152c08"/><path d="M109.6 120.1 Q112.2 131.7 116.4 141.5 Q118.7 147.6 117.7 150.6 H108.0 Q109.3 135.4 109.6 120.1 Z" fill="#5c8a18"/><path d="M117.1 115.7 Q114.0 129.1 109.0 140.3 Q106.3 147.4 107.5 150.9 H117.1 Z" fill="#152c08"/><path d="M117.1 115.7 Q120.1 129.1 125.1 140.3 Q127.8 147.4 126.7 150.9 H115.2 Q116.7 133.3 117.1 115.7 Z" fill="#5c8a18"/><path d="M0 147 L60 146 L130 147 L200 149.5 L215 153 L0 153 Z" fill="#1a3c12"/></g><rect x="176" y="141" width="12" height="7.6" fill="#e8ecf2"/><path d="M174.5 141 L182 135.5 L189.5 141 Z" fill="#6b4a3a"/></g></defs><use href="#lkTop"/><g clip-path="url(#lkC)"><g filter="url(#lkB)"><use href="#lkTop" transform="matrix(1 0 0 -1.03 0 309.5)"/></g><rect x="0" y="152" width="460" height="146" fill="url(#lkW)"/><rect x="0" y="152" width="460" height="146" fill="url(#lkR)"/><g stroke="#2a4a20" stroke-width="0.9" opacity="0.3"><path d="M336 262 V298"/><path d="M344 250 V298"/><path d="M352 266 V298"/><path d="M362 246 V298"/><path d="M372 256 V298"/><path d="M384 240 V298"/><path d="M396 254 V298"/><path d="M408 244 V298"/><path d="M420 236 V298"/><path d="M432 250 V298"/><path d="M444 234 V298"/><path d="M454 246 V298"/></g></g><g filter="url(#lkF)"><path d="M250 154 L300 159 L340 168 L366 181 L386 198 L420 204 L460 208 L460 148 L250 148 Z" fill="#9cb634"/><path d="M290 166 L340 172 L376 190 L384 200 L340 203 L300 192 L280 178 Z" fill="#6a9c24"/><path d="M350 172 L400 166 L440 170 L460 176 L460 196 L420 197 L384 192 Z" fill="#66704c"/></g><path d="M396 178 L420 176 L440 182 L458 186 L430 190 L404 186 Z" fill="#c4c3bd"/><path d="M250 152 Q290 154 320 160" stroke="#d4d0c0" stroke-width="2" fill="none" opacity="0.7"/><ellipse cx="306" cy="197" rx="9" ry="5" fill="#4a4a40"/><rect x="0" y="152.2" width="250" height="2" fill="#122c10" opacity="0.9"/></g></svg>
<svg class="b" style="left:1579.2px;top:1170px" width="229.6" height="147.6" viewBox="0 0 460 298" preserveAspectRatio="none"><use href="#lakeAll"/></svg>
<div class="b" style="left:1579.2px;top:1170px;width:229.6px;height:147.6px;box-shadow:inset 0 0 0 1px rgba(20,30,50,.28)"></div>
<div class="t" style="left:1612.8px;top:585px;font-size:25.0px;line-height:28px;color:#0a0a0a;letter-spacing:0.08px;">Air Balloon.jpg</div>
<div class="t" style="left:1967.7px;top:585px;font-size:25.0px;line-height:28px;color:#0a0a0a;letter-spacing:0.24px;">Autumn.jpg</div>
<div class="t" style="left:2314.2px;top:585px;font-size:25.0px;line-height:28px;color:#0a0a0a;letter-spacing:0.05px;">Beach.jpg</div>
<div class="t" style="left:1625.5px;top:999px;font-size:25.0px;line-height:28px;color:#0a0a0a;letter-spacing:0.08px;">Blossom.jpg</div>
<div class="t" style="left:1965.0px;top:999px;font-size:25.0px;line-height:28px;color:#0a0a0a;letter-spacing:0.20px;">Clouds.jpeg</div>
<div class="t" style="left:2311.2px;top:999px;font-size:25.0px;line-height:28px;color:#0a0a0a;letter-spacing:0.41px;">Desert.jpg</div>
<div class="t" style="left:1952.3px;top:1413px;font-size:25.0px;line-height:28px;color:#0a0a0a;letter-spacing:0.31px;">Mountains.jpg</div>
<div class="t" style="left:2307.7px;top:1413px;font-size:25.0px;line-height:28px;color:#0a0a0a;letter-spacing:-0.14px;">Railway.jpg</div>
<div class="b" style="left:1638px;top:1410px;width:112px;height:32px;border-radius:8px;background:#0f69d9"></div>
<div class="t" style="left:1646.7px;top:1413px;font-size:25.0px;line-height:28px;color:#fff;letter-spacing:0.01px;-webkit-text-stroke:0.5px #fff;">Lake.jpg</div>
<div class="t" style="left:2733.9px;top:1224px;font-size:32.69px;line-height:37px;color:#222;letter-spacing:0.20px;">Lake.jpg</div>
<div class="t" style="left:2699.8px;top:1301px;font-size:22.11px;line-height:25px;color:#a1a1a1;letter-spacing:1.15px;-webkit-text-stroke:0.7px #a1a1a1;">Kind:</div>
<div class="t" style="left:2774.3px;top:1301px;font-size:22.11px;line-height:25px;color:#1c1c1c;letter-spacing:-0.10px;">JPEG image</div>
<div class="t" style="left:2703.0px;top:1335px;font-size:22.11px;line-height:25px;color:#a1a1a1;letter-spacing:0.66px;-webkit-text-stroke:0.7px #a1a1a1;">Size:</div>
<div class="t" style="left:2774.3px;top:1335px;font-size:22.11px;line-height:25px;color:#1c1c1c;letter-spacing:-0.55px;">1,3 MB</div>
<div class="t" style="left:2662.7px;top:1369px;font-size:22.11px;line-height:25px;color:#a1a1a1;letter-spacing:1.04px;-webkit-text-stroke:0.7px #a1a1a1;">Created:</div>
<div class="t" style="left:2774.3px;top:1369px;font-size:22.11px;line-height:25px;color:#1c1c1c;letter-spacing:0.39px;">2018. Jan 29. 16:27</div>
<div class="t" style="left:2653.0px;top:1403px;font-size:22.11px;line-height:25px;color:#a1a1a1;letter-spacing:1.51px;-webkit-text-stroke:0.7px #a1a1a1;">Modified:</div>
<div class="t" style="left:2774.3px;top:1403px;font-size:22.11px;line-height:25px;color:#1c1c1c;letter-spacing:0.39px;">2018. Jan 29. 16:27</div>
<div class="t" style="left:2616.8px;top:1437px;font-size:22.11px;line-height:25px;color:#a1a1a1;letter-spacing:1.04px;-webkit-text-stroke:0.7px #a1a1a1;">Permissions:</div>
<div class="t" style="left:2774.3px;top:1437px;font-size:22.11px;line-height:25px;color:#1c1c1c;letter-spacing:1.67px;">rw-r--r-- (644)</div>
<div class="t" style="left:2678.0px;top:1471px;font-size:22.11px;line-height:25px;color:#a1a1a1;letter-spacing:1.11px;-webkit-text-stroke:0.7px #a1a1a1;">Owner:</div>
<div class="t" style="left:2774.3px;top:1471px;font-size:22.11px;line-height:25px;color:#1c1c1c;letter-spacing:0.63px;">root</div>
<div class="t" style="left:2682.5px;top:1505px;font-size:22.11px;line-height:25px;color:#a1a1a1;letter-spacing:0.94px;-webkit-text-stroke:0.7px #a1a1a1;">Group:</div>
<div class="t" style="left:2774.3px;top:1505px;font-size:22.11px;line-height:25px;color:#1c1c1c;letter-spacing:1.25px;">staff</div>
<div class="t" style="left:2622.7px;top:1539px;font-size:22.11px;line-height:25px;color:#a1a1a1;letter-spacing:1.04px;-webkit-text-stroke:0.7px #a1a1a1;">Dimensions:</div>
<div class="t" style="left:2774.3px;top:1539px;font-size:22.11px;line-height:25px;color:#1c1c1c;letter-spacing:0.73px;">2200 x 1429</div>
</div></div>
</body></html>
